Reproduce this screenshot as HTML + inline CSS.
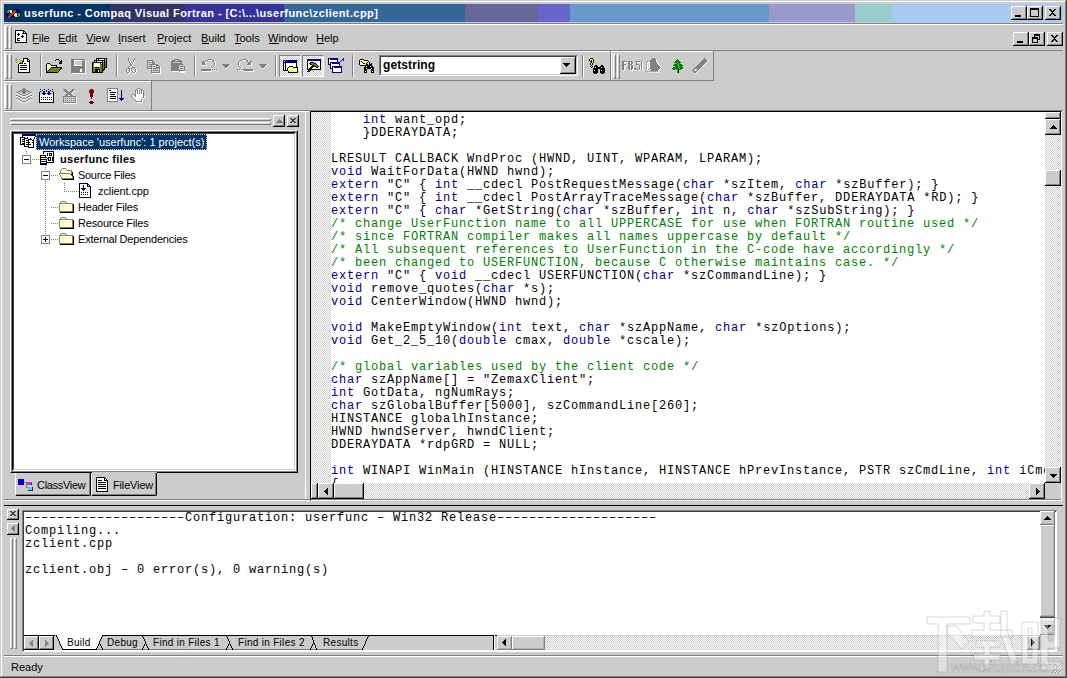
<!DOCTYPE html>
<html><head><meta charset="utf-8">
<style>
*{margin:0;padding:0;box-sizing:border-box}
html,body{width:1067px;height:678px;overflow:hidden;background:#cccccc}
body{position:relative;font-family:"Liberation Sans",sans-serif;font-size:11px;line-height:13px;color:#000}
.a{position:absolute}
svg.a{overflow:visible}
.dither{background-color:#fff;background-image:linear-gradient(45deg,#cccccc 25%,transparent 25%,transparent 75%,#cccccc 75%),linear-gradient(45deg,#cccccc 25%,transparent 25%,transparent 75%,#cccccc 75%);background-size:2px 2px;background-position:0 0,1px 1px}
.mono{font-family:"Liberation Mono",monospace;font-size:12px;letter-spacing:0.8px;line-height:13px;white-space:pre}
.k{color:#000080}.c{color:#008000}
u{text-decoration:none;border-bottom:1px solid #000}
</style></head><body>

<div class="a" style="left:1px;top:1px;width:1px;height:676px;background:#fff"></div>
<div class="a" style="left:1px;top:1px;width:1065px;height:1px;background:#fff"></div>
<div class="a" style="left:1065px;top:1px;width:1px;height:676px;background:#808080"></div>
<div class="a" style="left:1066px;top:0px;width:1px;height:678px;background:#404040"></div>
<div class="a" style="left:1px;top:676px;width:1065px;height:1px;background:#808080"></div>
<div class="a" style="left:0px;top:677px;width:1067px;height:1px;background:#404040"></div>
<div class="a" style="left:4px;top:4px;width:106px;height:18px;background:#003366"></div>
<div class="a" style="left:110px;top:4px;width:74px;height:18px;background:#333366"></div>
<div class="a" style="left:184px;top:4px;width:100px;height:18px;background:#333399"></div>
<div class="a" style="left:284px;top:4px;width:181px;height:18px;background:#336699"></div>
<div class="a" style="left:465px;top:4px;width:73px;height:18px;background:#666699"></div>
<div class="a" style="left:538px;top:4px;width:32px;height:18px;background:#6666cc"></div>
<div class="a" style="left:570px;top:4px;width:199px;height:18px;background:#6699cc"></div>
<div class="a" style="left:769px;top:4px;width:86px;height:18px;background:#9999cc"></div>
<div class="a" style="left:855px;top:4px;width:37px;height:18px;background:#99cccc"></div>
<div class="a" style="left:892px;top:4px;width:171px;height:18px;background:#a6caf0"></div>
<svg class="a" style="left:5px;top:9px;" width="16" height="9" viewBox="0 0 16 9" shape-rendering="crispEdges"><rect x="3" y="0" width="4" height="1" fill="#001030"/><rect x="9" y="0" width="5" height="1" fill="#001030"/><rect x="2" y="1" width="1" height="1" fill="#001030"/><rect x="3" y="1" width="2" height="1" fill="#30b050"/><rect x="5" y="1" width="2" height="1" fill="#f0f070"/><rect x="7" y="1" width="1" height="1" fill="#001030"/><rect x="9" y="1" width="2" height="1" fill="#d02828"/><rect x="11" y="1" width="3" height="1" fill="#0000a0"/><rect x="14" y="1" width="1" height="1" fill="#001030"/><rect x="1" y="2" width="1" height="1" fill="#001030"/><rect x="2" y="2" width="3" height="1" fill="#30b050"/><rect x="5" y="2" width="2" height="1" fill="#f0f070"/><rect x="7" y="2" width="1" height="1" fill="#001030"/><rect x="8" y="2" width="3" height="1" fill="#d02828"/><rect x="11" y="2" width="4" height="1" fill="#0000a0"/><rect x="15" y="2" width="1" height="1" fill="#001030"/><rect x="1" y="3" width="1" height="1" fill="#001030"/><rect x="2" y="3" width="2" height="1" fill="#30b050"/><rect x="4" y="3" width="1" height="1" fill="#001030"/><rect x="5" y="3" width="2" height="1" fill="#f0f070"/><rect x="7" y="3" width="3" height="1" fill="#d02828"/><rect x="10" y="3" width="1" height="1" fill="#001030"/><rect x="11" y="3" width="4" height="1" fill="#0000a0"/><rect x="15" y="3" width="1" height="1" fill="#001030"/><rect x="1" y="4" width="1" height="1" fill="#001030"/><rect x="2" y="4" width="2" height="1" fill="#0000a0"/><rect x="4" y="4" width="2" height="1" fill="#001030"/><rect x="6" y="4" width="3" height="1" fill="#d02828"/><rect x="9" y="4" width="1" height="1" fill="#001030"/><rect x="10" y="4" width="2" height="1" fill="#f0f070"/><rect x="12" y="4" width="1" height="1" fill="#001030"/><rect x="13" y="4" width="2" height="1" fill="#30b050"/><rect x="15" y="4" width="1" height="1" fill="#001030"/><rect x="1" y="5" width="1" height="1" fill="#001030"/><rect x="2" y="5" width="3" height="1" fill="#0000a0"/><rect x="5" y="5" width="3" height="1" fill="#d02828"/><rect x="8" y="5" width="1" height="1" fill="#001030"/><rect x="9" y="5" width="3" height="1" fill="#f0f070"/><rect x="12" y="5" width="1" height="1" fill="#001030"/><rect x="13" y="5" width="2" height="1" fill="#30b050"/><rect x="15" y="5" width="1" height="1" fill="#001030"/><rect x="1" y="6" width="1" height="1" fill="#001030"/><rect x="2" y="6" width="2" height="1" fill="#0000a0"/><rect x="4" y="6" width="3" height="1" fill="#d02828"/><rect x="7" y="6" width="1" height="1" fill="#0000a0"/><rect x="8" y="6" width="1" height="1" fill="#001030"/><rect x="9" y="6" width="3" height="1" fill="#f0f070"/><rect x="12" y="6" width="1" height="1" fill="#001030"/><rect x="13" y="6" width="2" height="1" fill="#30b050"/><rect x="15" y="6" width="1" height="1" fill="#001030"/><rect x="2" y="7" width="1" height="1" fill="#001030"/><rect x="3" y="7" width="3" height="1" fill="#d02828"/><rect x="6" y="7" width="2" height="1" fill="#0000a0"/><rect x="8" y="7" width="2" height="1" fill="#001030"/><rect x="10" y="7" width="2" height="1" fill="#f0f070"/><rect x="12" y="7" width="2" height="1" fill="#30b050"/><rect x="14" y="7" width="1" height="1" fill="#001030"/><rect x="3" y="8" width="2" height="1" fill="#d02828"/><rect x="5" y="8" width="3" height="1" fill="#001030"/><rect x="10" y="8" width="4" height="1" fill="#001030"/></svg>
<div class="a " style="left:24px;top:5px;white-space:pre;color:#fff;font-weight:bold;font-size:11px;line-height:17px;letter-spacing:0.42px">userfunc - Compaq Visual Fortran - [C:\...\userfunc\zclient.cpp]</div>
<div class="a" style="left:1011px;top:6px;width:16px;height:14px;background:#cccccc;box-shadow:inset -1px -1px 0 #000,inset 1px 1px 0 #fff,inset -2px -2px 0 #808080"></div>
<div class="a" style="left:1027px;top:6px;width:16px;height:14px;background:#cccccc;box-shadow:inset -1px -1px 0 #000,inset 1px 1px 0 #fff,inset -2px -2px 0 #808080"></div>
<div class="a" style="left:1045px;top:6px;width:16px;height:14px;background:#cccccc;box-shadow:inset -1px -1px 0 #000,inset 1px 1px 0 #fff,inset -2px -2px 0 #808080"></div>
<svg class="a" style="left:1011px;top:6px;" width="16" height="14" viewBox="0 0 16 14" shape-rendering="crispEdges"><rect x="4" y="9" width="6" height="2" fill="#000"/></svg>
<svg class="a" style="left:1027px;top:6px;" width="16" height="14" viewBox="0 0 16 14" shape-rendering="crispEdges"><rect x="3" y="2" width="9" height="9" fill="#000"/><rect x="4" y="4" width="7" height="6" fill="#cccccc"/></svg>
<svg class="a" style="left:1045px;top:6px;" width="16" height="14" viewBox="0 0 16 14" shape-rendering="crispEdges"><path d="M4 3h2v1h1v1h1v-1h1v-1h2v1h-1v1h-1v1h-1v1h1v1h1v1h1v1h-2v-1h-1v-1h-1v1h-1v1h-2v-1h1v-1h1v-1h1v-1h-1v-1h-1v-1h-1z" fill="#000"/></svg>
<div class="a" style="left:4px;top:23px;width:1059px;height:1px;background:#808080"></div>
<div class="a" style="left:4px;top:24px;width:1059px;height:1px;background:#fff"></div>
<div class="a" style="left:5px;top:26px;width:3px;height:23px;border:1px solid;border-color:#fff #808080 #808080 #fff"></div>
<div class="a" style="left:9px;top:26px;width:3px;height:23px;border:1px solid;border-color:#fff #808080 #808080 #fff"></div>
<svg class="a" style="left:15px;top:30px;" width="12" height="13" viewBox="0 0 12 13" shape-rendering="crispEdges"><rect x="0" y="0" width="9" height="1" fill="#000"/><rect x="0" y="1" width="1" height="1" fill="#000"/><rect x="1" y="1" width="7" height="1" fill="#fff"/><rect x="8" y="1" width="2" height="1" fill="#000"/><rect x="0" y="2" width="1" height="1" fill="#000"/><rect x="1" y="2" width="7" height="1" fill="#fff"/><rect x="8" y="2" width="1" height="1" fill="#000"/><rect x="9" y="2" width="1" height="1" fill="#fff"/><rect x="10" y="2" width="1" height="1" fill="#000"/><rect x="0" y="3" width="1" height="1" fill="#000"/><rect x="1" y="3" width="2" height="1" fill="#fff"/><rect x="3" y="3" width="1" height="1" fill="#000"/><rect x="4" y="3" width="3" height="1" fill="#fff"/><rect x="7" y="3" width="5" height="1" fill="#000"/><rect x="0" y="4" width="1" height="1" fill="#000"/><rect x="1" y="4" width="1" height="1" fill="#fff"/><rect x="2" y="4" width="3" height="1" fill="#000"/><rect x="5" y="4" width="6" height="1" fill="#fff"/><rect x="11" y="4" width="1" height="1" fill="#000"/><rect x="0" y="5" width="1" height="1" fill="#000"/><rect x="1" y="5" width="2" height="1" fill="#fff"/><rect x="3" y="5" width="1" height="1" fill="#000"/><rect x="4" y="5" width="3" height="1" fill="#fff"/><rect x="7" y="5" width="1" height="1" fill="#000"/><rect x="8" y="5" width="3" height="1" fill="#fff"/><rect x="11" y="5" width="1" height="1" fill="#000"/><rect x="0" y="6" width="1" height="1" fill="#000"/><rect x="1" y="6" width="5" height="1" fill="#fff"/><rect x="6" y="6" width="3" height="1" fill="#000"/><rect x="9" y="6" width="2" height="1" fill="#fff"/><rect x="11" y="6" width="1" height="1" fill="#000"/><rect x="0" y="7" width="1" height="1" fill="#000"/><rect x="1" y="7" width="6" height="1" fill="#fff"/><rect x="7" y="7" width="1" height="1" fill="#000"/><rect x="8" y="7" width="3" height="1" fill="#fff"/><rect x="11" y="7" width="1" height="1" fill="#000"/><rect x="0" y="8" width="1" height="1" fill="#000"/><rect x="1" y="8" width="1" height="1" fill="#fff"/><rect x="2" y="8" width="3" height="1" fill="#000"/><rect x="5" y="8" width="6" height="1" fill="#fff"/><rect x="11" y="8" width="1" height="1" fill="#000"/><rect x="0" y="9" width="1" height="1" fill="#000"/><rect x="1" y="9" width="1" height="1" fill="#fff"/><rect x="2" y="9" width="1" height="1" fill="#000"/><rect x="3" y="9" width="8" height="1" fill="#fff"/><rect x="11" y="9" width="1" height="1" fill="#000"/><rect x="0" y="10" width="1" height="1" fill="#000"/><rect x="1" y="10" width="1" height="1" fill="#fff"/><rect x="2" y="10" width="3" height="1" fill="#000"/><rect x="5" y="10" width="6" height="1" fill="#fff"/><rect x="11" y="10" width="1" height="1" fill="#000"/><rect x="0" y="11" width="1" height="1" fill="#000"/><rect x="1" y="11" width="10" height="1" fill="#fff"/><rect x="11" y="11" width="1" height="1" fill="#000"/><rect x="0" y="12" width="12" height="1" fill="#000"/></svg>
<div class="a " style="left:32px;top:32px;white-space:pre;line-height:13px">File</div>
<div class="a" style="left:33px;top:43px;width:6px;height:1px;background:#000"></div>
<div class="a " style="left:58px;top:32px;white-space:pre;line-height:13px">Edit</div>
<div class="a" style="left:59px;top:43px;width:7px;height:1px;background:#000"></div>
<div class="a " style="left:86px;top:32px;white-space:pre;line-height:13px">View</div>
<div class="a" style="left:87px;top:43px;width:7px;height:1px;background:#000"></div>
<div class="a " style="left:118px;top:32px;white-space:pre;line-height:13px">Insert</div>
<div class="a" style="left:119px;top:43px;width:2px;height:1px;background:#000"></div>
<div class="a " style="left:157px;top:32px;white-space:pre;line-height:13px">Project</div>
<div class="a" style="left:158px;top:43px;width:7px;height:1px;background:#000"></div>
<div class="a " style="left:201px;top:32px;white-space:pre;line-height:13px">Build</div>
<div class="a" style="left:202px;top:43px;width:7px;height:1px;background:#000"></div>
<div class="a " style="left:234px;top:32px;white-space:pre;line-height:13px">Tools</div>
<div class="a" style="left:235px;top:43px;width:6px;height:1px;background:#000"></div>
<div class="a " style="left:268px;top:32px;white-space:pre;line-height:13px">Window</div>
<div class="a" style="left:269px;top:43px;width:10px;height:1px;background:#000"></div>
<div class="a " style="left:316px;top:32px;white-space:pre;line-height:13px">Help</div>
<div class="a" style="left:317px;top:43px;width:7px;height:1px;background:#000"></div>
<div class="a" style="left:1013px;top:32px;width:16px;height:14px;background:#cccccc;box-shadow:inset -1px -1px 0 #000,inset 1px 1px 0 #fff,inset -2px -2px 0 #808080"></div>
<div class="a" style="left:1029px;top:32px;width:16px;height:14px;background:#cccccc;box-shadow:inset -1px -1px 0 #000,inset 1px 1px 0 #fff,inset -2px -2px 0 #808080"></div>
<div class="a" style="left:1047px;top:32px;width:16px;height:14px;background:#cccccc;box-shadow:inset -1px -1px 0 #000,inset 1px 1px 0 #fff,inset -2px -2px 0 #808080"></div>
<svg class="a" style="left:1013px;top:32px;" width="16" height="14" viewBox="0 0 16 14" shape-rendering="crispEdges"><rect x="4" y="9" width="6" height="2" fill="#000"/></svg>
<svg class="a" style="left:1029px;top:32px;" width="16" height="14" viewBox="0 0 16 14" shape-rendering="crispEdges"><rect x="5" y="2" width="6" height="1" fill="#000"/><rect x="5" y="3" width="6" height="1" fill="#000"/><rect x="5" y="2" width="1" height="3" fill="#000"/><rect x="10" y="2" width="1" height="6" fill="#000"/><rect x="9" y="7" width="2" height="1" fill="#000"/><rect x="3" y="5" width="6" height="2" fill="#000"/><rect x="3" y="5" width="1" height="6" fill="#000"/><rect x="8" y="5" width="1" height="6" fill="#000"/><rect x="3" y="10" width="6" height="1" fill="#000"/></svg>
<svg class="a" style="left:1047px;top:32px;" width="16" height="14" viewBox="0 0 16 14" shape-rendering="crispEdges"><path d="M4 3h2v1h1v1h1v-1h1v-1h2v1h-1v1h-1v1h-1v1h1v1h1v1h1v1h-2v-1h-1v-1h-1v1h-1v1h-2v-1h1v-1h1v-1h1v-1h-1v-1h-1v-1h-1z" fill="#000"/></svg>
<div class="a" style="left:4px;top:25px;width:1px;height:25px;background:#fff"></div>
<div class="a" style="left:4px;top:52px;width:1px;height:28px;background:#fff"></div>
<div class="a" style="left:4px;top:82px;width:1px;height:28px;background:#fff"></div>
<div class="a" style="left:4px;top:50px;width:1059px;height:1px;background:#808080"></div>
<div class="a" style="left:4px;top:51px;width:606px;height:1px;background:#fff"></div>
<div class="a" style="left:611px;top:51px;width:102px;height:1px;background:#fff"></div>
<div class="a" style="left:4px;top:80px;width:710px;height:1px;background:#808080"></div>
<div class="a" style="left:4px;top:81px;width:147px;height:1px;background:#fff"></div>
<div class="a" style="left:4px;top:110px;width:1059px;height:1px;background:#808080"></div>
<div class="a" style="left:4px;top:111px;width:1059px;height:1px;background:#fff"></div>
<div class="a" style="left:610px;top:51px;width:1px;height:30px;background:#808080"></div>
<div class="a" style="left:611px;top:51px;width:1px;height:29px;background:#fff"></div>
<div class="a" style="left:713px;top:51px;width:1px;height:30px;background:#808080"></div>
<div class="a" style="left:151px;top:81px;width:1px;height:30px;background:#808080"></div>
<div class="a" style="left:5px;top:54px;width:3px;height:25px;border:1px solid;border-color:#fff #808080 #808080 #fff"></div>
<div class="a" style="left:9px;top:54px;width:3px;height:25px;border:1px solid;border-color:#fff #808080 #808080 #fff"></div>
<svg class="a" style="left:14px;top:57px;" width="16" height="16" viewBox="0 0 16 16" shape-rendering="crispEdges"><rect x="2" y="1" width="1" height="1" fill="#808080"/><rect x="4" y="1" width="1" height="1" fill="#ffff00"/><rect x="9" y="1" width="5" height="1" fill="#000"/><rect x="3" y="2" width="1" height="1" fill="#808080"/><rect x="4" y="2" width="1" height="1" fill="#ffff00"/><rect x="5" y="2" width="1" height="1" fill="#808080"/><rect x="9" y="2" width="1" height="1" fill="#000"/><rect x="10" y="2" width="3" height="1" fill="#fff"/><rect x="13" y="2" width="2" height="1" fill="#000"/><rect x="1" y="3" width="2" height="1" fill="#808080"/><rect x="3" y="3" width="3" height="1" fill="#ffff00"/><rect x="6" y="3" width="2" height="1" fill="#808080"/><rect x="9" y="3" width="1" height="1" fill="#000"/><rect x="10" y="3" width="3" height="1" fill="#fff"/><rect x="13" y="3" width="1" height="1" fill="#000"/><rect x="14" y="3" width="1" height="1" fill="#fff"/><rect x="15" y="3" width="1" height="1" fill="#000"/><rect x="3" y="4" width="1" height="1" fill="#808080"/><rect x="4" y="4" width="1" height="1" fill="#ffff00"/><rect x="5" y="4" width="1" height="1" fill="#808080"/><rect x="8" y="4" width="2" height="1" fill="#000"/><rect x="10" y="4" width="3" height="1" fill="#fff"/><rect x="13" y="4" width="3" height="1" fill="#000"/><rect x="2" y="5" width="1" height="1" fill="#808080"/><rect x="4" y="5" width="1" height="1" fill="#ffff00"/><rect x="6" y="5" width="1" height="1" fill="#808080"/><rect x="8" y="5" width="1" height="1" fill="#000"/><rect x="9" y="5" width="6" height="1" fill="#fff"/><rect x="15" y="5" width="1" height="1" fill="#000"/><rect x="5" y="6" width="4" height="1" fill="#000"/><rect x="9" y="6" width="1" height="1" fill="#fff"/><rect x="10" y="6" width="2" height="1" fill="#000"/><rect x="12" y="6" width="3" height="1" fill="#fff"/><rect x="15" y="6" width="1" height="1" fill="#000"/><rect x="4" y="7" width="1" height="1" fill="#000"/><rect x="5" y="7" width="10" height="1" fill="#fff"/><rect x="15" y="7" width="1" height="1" fill="#000"/><rect x="4" y="8" width="1" height="1" fill="#000"/><rect x="5" y="8" width="1" height="1" fill="#fff"/><rect x="6" y="8" width="7" height="1" fill="#000"/><rect x="13" y="8" width="2" height="1" fill="#fff"/><rect x="15" y="8" width="1" height="1" fill="#000"/><rect x="4" y="9" width="1" height="1" fill="#000"/><rect x="5" y="9" width="10" height="1" fill="#fff"/><rect x="15" y="9" width="1" height="1" fill="#000"/><rect x="4" y="10" width="1" height="1" fill="#000"/><rect x="5" y="10" width="1" height="1" fill="#fff"/><rect x="6" y="10" width="7" height="1" fill="#000"/><rect x="13" y="10" width="2" height="1" fill="#fff"/><rect x="15" y="10" width="1" height="1" fill="#000"/><rect x="4" y="11" width="1" height="1" fill="#000"/><rect x="5" y="11" width="10" height="1" fill="#fff"/><rect x="15" y="11" width="1" height="1" fill="#000"/><rect x="4" y="12" width="1" height="1" fill="#000"/><rect x="5" y="12" width="1" height="1" fill="#fff"/><rect x="6" y="12" width="7" height="1" fill="#000"/><rect x="13" y="12" width="2" height="1" fill="#fff"/><rect x="15" y="12" width="1" height="1" fill="#000"/><rect x="4" y="13" width="1" height="1" fill="#000"/><rect x="5" y="13" width="10" height="1" fill="#fff"/><rect x="15" y="13" width="1" height="1" fill="#000"/><rect x="4" y="14" width="1" height="1" fill="#000"/><rect x="5" y="14" width="10" height="1" fill="#fff"/><rect x="15" y="14" width="1" height="1" fill="#000"/><rect x="4" y="15" width="12" height="1" fill="#000"/></svg>
<div class="a" style="left:40px;top:55px;width:1px;height:22px;background:#808080"></div>
<div class="a" style="left:41px;top:55px;width:1px;height:22px;background:#fff"></div>
<svg class="a" style="left:46px;top:58px;" width="16" height="15" viewBox="0 0 16 15" shape-rendering="crispEdges"><rect x="10" y="1" width="3" height="1" fill="#000"/><rect x="9" y="2" width="1" height="1" fill="#000"/><rect x="13" y="2" width="1" height="1" fill="#000"/><rect x="15" y="2" width="1" height="1" fill="#000"/><rect x="14" y="3" width="2" height="1" fill="#000"/><rect x="13" y="4" width="3" height="1" fill="#000"/><rect x="1" y="5" width="3" height="1" fill="#000"/><rect x="13" y="5" width="3" height="1" fill="#000"/><rect x="0" y="6" width="1" height="1" fill="#000"/><rect x="1" y="6" width="1" height="1" fill="#ffff99"/><rect x="2" y="6" width="1" height="1" fill="#fff"/><rect x="3" y="6" width="1" height="1" fill="#ffff99"/><rect x="4" y="6" width="1" height="1" fill="#000"/><rect x="0" y="7" width="1" height="1" fill="#000"/><rect x="1" y="7" width="1" height="1" fill="#fff"/><rect x="2" y="7" width="1" height="1" fill="#ffff99"/><rect x="3" y="7" width="1" height="1" fill="#fff"/><rect x="4" y="7" width="1" height="1" fill="#ffff99"/><rect x="5" y="7" width="6" height="1" fill="#000"/><rect x="0" y="8" width="1" height="1" fill="#000"/><rect x="1" y="8" width="1" height="1" fill="#ffff99"/><rect x="2" y="8" width="1" height="1" fill="#fff"/><rect x="3" y="8" width="1" height="1" fill="#ffff99"/><rect x="4" y="8" width="1" height="1" fill="#fff"/><rect x="5" y="8" width="1" height="1" fill="#ffff99"/><rect x="6" y="8" width="1" height="1" fill="#fff"/><rect x="7" y="8" width="1" height="1" fill="#ffff99"/><rect x="8" y="8" width="1" height="1" fill="#fff"/><rect x="9" y="8" width="1" height="1" fill="#ffff99"/><rect x="10" y="8" width="1" height="1" fill="#000"/><rect x="0" y="9" width="1" height="1" fill="#000"/><rect x="1" y="9" width="1" height="1" fill="#fff"/><rect x="2" y="9" width="1" height="1" fill="#ffff99"/><rect x="3" y="9" width="1" height="1" fill="#fff"/><rect x="4" y="9" width="1" height="1" fill="#ffff99"/><rect x="5" y="9" width="11" height="1" fill="#000"/><rect x="0" y="10" width="1" height="1" fill="#000"/><rect x="1" y="10" width="1" height="1" fill="#ffff99"/><rect x="2" y="10" width="1" height="1" fill="#fff"/><rect x="3" y="10" width="1" height="1" fill="#ffff99"/><rect x="4" y="10" width="1" height="1" fill="#000"/><rect x="5" y="10" width="10" height="1" fill="#808000"/><rect x="15" y="10" width="1" height="1" fill="#000"/><rect x="0" y="11" width="1" height="1" fill="#000"/><rect x="1" y="11" width="1" height="1" fill="#fff"/><rect x="2" y="11" width="1" height="1" fill="#ffff99"/><rect x="3" y="11" width="1" height="1" fill="#000"/><rect x="4" y="11" width="10" height="1" fill="#808000"/><rect x="14" y="11" width="1" height="1" fill="#000"/><rect x="0" y="12" width="1" height="1" fill="#000"/><rect x="1" y="12" width="1" height="1" fill="#ffff99"/><rect x="2" y="12" width="1" height="1" fill="#000"/><rect x="3" y="12" width="10" height="1" fill="#808000"/><rect x="13" y="12" width="1" height="1" fill="#000"/><rect x="0" y="13" width="2" height="1" fill="#000"/><rect x="2" y="13" width="10" height="1" fill="#808000"/><rect x="12" y="13" width="1" height="1" fill="#000"/><rect x="0" y="14" width="12" height="1" fill="#000"/></svg>
<svg class="a" style="left:71px;top:59px;" width="15" height="15" viewBox="0 0 15 15" shape-rendering="crispEdges"><rect x="0" y="0" width="14" height="1" fill="#808080"/><rect x="0" y="1" width="3" height="1" fill="#808080"/><rect x="3" y="1" width="8" height="1" fill="#fff"/><rect x="11" y="1" width="1" height="1" fill="#808080"/><rect x="12" y="1" width="1" height="1" fill="#fff"/><rect x="13" y="1" width="1" height="1" fill="#808080"/><rect x="0" y="2" width="3" height="1" fill="#808080"/><rect x="3" y="2" width="1" height="1" fill="#fff"/><rect x="4" y="2" width="7" height="1" fill="#cccccc"/><rect x="11" y="2" width="3" height="1" fill="#808080"/><rect x="14" y="2" width="1" height="1" fill="#fff"/><rect x="0" y="3" width="3" height="1" fill="#808080"/><rect x="3" y="3" width="1" height="1" fill="#fff"/><rect x="4" y="3" width="7" height="1" fill="#cccccc"/><rect x="11" y="3" width="3" height="1" fill="#808080"/><rect x="14" y="3" width="1" height="1" fill="#fff"/><rect x="0" y="4" width="3" height="1" fill="#808080"/><rect x="3" y="4" width="1" height="1" fill="#fff"/><rect x="4" y="4" width="7" height="1" fill="#cccccc"/><rect x="11" y="4" width="3" height="1" fill="#808080"/><rect x="14" y="4" width="1" height="1" fill="#fff"/><rect x="0" y="5" width="3" height="1" fill="#808080"/><rect x="3" y="5" width="1" height="1" fill="#fff"/><rect x="4" y="5" width="7" height="1" fill="#cccccc"/><rect x="11" y="5" width="3" height="1" fill="#808080"/><rect x="14" y="5" width="1" height="1" fill="#fff"/><rect x="0" y="6" width="3" height="1" fill="#808080"/><rect x="3" y="6" width="8" height="1" fill="#fff"/><rect x="11" y="6" width="3" height="1" fill="#808080"/><rect x="14" y="6" width="1" height="1" fill="#fff"/><rect x="0" y="7" width="14" height="1" fill="#808080"/><rect x="14" y="7" width="1" height="1" fill="#fff"/><rect x="0" y="8" width="14" height="1" fill="#808080"/><rect x="14" y="8" width="1" height="1" fill="#fff"/><rect x="0" y="9" width="14" height="1" fill="#808080"/><rect x="14" y="9" width="1" height="1" fill="#fff"/><rect x="0" y="10" width="9" height="1" fill="#808080"/><rect x="9" y="10" width="2" height="1" fill="#fff"/><rect x="11" y="10" width="3" height="1" fill="#808080"/><rect x="14" y="10" width="1" height="1" fill="#fff"/><rect x="0" y="11" width="9" height="1" fill="#808080"/><rect x="9" y="11" width="2" height="1" fill="#fff"/><rect x="11" y="11" width="3" height="1" fill="#808080"/><rect x="14" y="11" width="1" height="1" fill="#fff"/><rect x="0" y="12" width="9" height="1" fill="#808080"/><rect x="9" y="12" width="2" height="1" fill="#fff"/><rect x="11" y="12" width="3" height="1" fill="#808080"/><rect x="14" y="12" width="1" height="1" fill="#fff"/><rect x="0" y="13" width="14" height="1" fill="#808080"/><rect x="14" y="13" width="1" height="1" fill="#fff"/><rect x="1" y="14" width="14" height="1" fill="#fff"/></svg>
<svg class="a" style="left:92px;top:58px;" width="16" height="15" viewBox="0 0 16 15" shape-rendering="crispEdges"><rect x="4" y="0" width="11" height="1" fill="#000"/><rect x="4" y="1" width="1" height="1" fill="#000"/><rect x="5" y="1" width="1" height="1" fill="#fff"/><rect x="6" y="1" width="1" height="1" fill="#000"/><rect x="7" y="1" width="5" height="1" fill="#fff"/><rect x="12" y="1" width="1" height="1" fill="#000"/><rect x="13" y="1" width="1" height="1" fill="#fff"/><rect x="14" y="1" width="1" height="1" fill="#000"/><rect x="2" y="2" width="11" height="1" fill="#000"/><rect x="13" y="2" width="1" height="1" fill="#808000"/><rect x="14" y="2" width="1" height="1" fill="#000"/><rect x="2" y="3" width="1" height="1" fill="#000"/><rect x="3" y="3" width="1" height="1" fill="#fff"/><rect x="4" y="3" width="1" height="1" fill="#000"/><rect x="5" y="3" width="5" height="1" fill="#fff"/><rect x="10" y="3" width="1" height="1" fill="#000"/><rect x="11" y="3" width="1" height="1" fill="#fff"/><rect x="12" y="3" width="1" height="1" fill="#000"/><rect x="13" y="3" width="1" height="1" fill="#808000"/><rect x="14" y="3" width="1" height="1" fill="#000"/><rect x="0" y="4" width="11" height="1" fill="#000"/><rect x="11" y="4" width="1" height="1" fill="#808000"/><rect x="12" y="4" width="1" height="1" fill="#000"/><rect x="13" y="4" width="1" height="1" fill="#808000"/><rect x="14" y="4" width="1" height="1" fill="#000"/><rect x="0" y="5" width="1" height="1" fill="#000"/><rect x="1" y="5" width="1" height="1" fill="#808000"/><rect x="2" y="5" width="6" height="1" fill="#fff"/><rect x="8" y="5" width="1" height="1" fill="#000"/><rect x="9" y="5" width="1" height="1" fill="#fff"/><rect x="10" y="5" width="1" height="1" fill="#000"/><rect x="11" y="5" width="1" height="1" fill="#808000"/><rect x="12" y="5" width="1" height="1" fill="#000"/><rect x="13" y="5" width="1" height="1" fill="#808000"/><rect x="14" y="5" width="1" height="1" fill="#000"/><rect x="0" y="6" width="1" height="1" fill="#000"/><rect x="1" y="6" width="1" height="1" fill="#808000"/><rect x="2" y="6" width="6" height="1" fill="#fff"/><rect x="8" y="6" width="2" height="1" fill="#808000"/><rect x="10" y="6" width="1" height="1" fill="#000"/><rect x="11" y="6" width="1" height="1" fill="#808000"/><rect x="12" y="6" width="1" height="1" fill="#000"/><rect x="13" y="6" width="1" height="1" fill="#808000"/><rect x="14" y="6" width="1" height="1" fill="#000"/><rect x="0" y="7" width="1" height="1" fill="#000"/><rect x="1" y="7" width="1" height="1" fill="#808000"/><rect x="2" y="7" width="6" height="1" fill="#fff"/><rect x="8" y="7" width="2" height="1" fill="#808000"/><rect x="10" y="7" width="1" height="1" fill="#000"/><rect x="11" y="7" width="1" height="1" fill="#808000"/><rect x="12" y="7" width="1" height="1" fill="#000"/><rect x="13" y="7" width="1" height="1" fill="#808000"/><rect x="14" y="7" width="1" height="1" fill="#000"/><rect x="0" y="8" width="1" height="1" fill="#000"/><rect x="1" y="8" width="1" height="1" fill="#808000"/><rect x="2" y="8" width="6" height="1" fill="#fff"/><rect x="8" y="8" width="2" height="1" fill="#808000"/><rect x="10" y="8" width="1" height="1" fill="#000"/><rect x="11" y="8" width="1" height="1" fill="#808000"/><rect x="12" y="8" width="1" height="1" fill="#000"/><rect x="13" y="8" width="1" height="1" fill="#808000"/><rect x="14" y="8" width="1" height="1" fill="#000"/><rect x="0" y="9" width="1" height="1" fill="#000"/><rect x="1" y="9" width="2" height="1" fill="#808000"/><rect x="3" y="9" width="4" height="1" fill="#000"/><rect x="7" y="9" width="3" height="1" fill="#808000"/><rect x="10" y="9" width="1" height="1" fill="#000"/><rect x="11" y="9" width="1" height="1" fill="#808000"/><rect x="12" y="9" width="3" height="1" fill="#000"/><rect x="0" y="10" width="1" height="1" fill="#000"/><rect x="1" y="10" width="9" height="1" fill="#808000"/><rect x="10" y="10" width="1" height="1" fill="#000"/><rect x="11" y="10" width="1" height="1" fill="#808000"/><rect x="12" y="10" width="1" height="1" fill="#000"/><rect x="0" y="11" width="1" height="1" fill="#000"/><rect x="1" y="11" width="2" height="1" fill="#808000"/><rect x="3" y="11" width="5" height="1" fill="#000"/><rect x="8" y="11" width="2" height="1" fill="#808000"/><rect x="10" y="11" width="3" height="1" fill="#000"/><rect x="0" y="12" width="1" height="1" fill="#000"/><rect x="1" y="12" width="2" height="1" fill="#808000"/><rect x="3" y="12" width="3" height="1" fill="#000"/><rect x="6" y="12" width="1" height="1" fill="#fff"/><rect x="7" y="12" width="1" height="1" fill="#000"/><rect x="8" y="12" width="2" height="1" fill="#808000"/><rect x="10" y="12" width="2" height="1" fill="#000"/><rect x="0" y="13" width="1" height="1" fill="#000"/><rect x="1" y="13" width="2" height="1" fill="#808000"/><rect x="3" y="13" width="3" height="1" fill="#000"/><rect x="6" y="13" width="1" height="1" fill="#fff"/><rect x="7" y="13" width="1" height="1" fill="#000"/><rect x="8" y="13" width="2" height="1" fill="#808000"/><rect x="10" y="13" width="1" height="1" fill="#000"/><rect x="0" y="14" width="11" height="1" fill="#000"/></svg>
<div class="a" style="left:116px;top:55px;width:1px;height:22px;background:#808080"></div>
<div class="a" style="left:117px;top:55px;width:1px;height:22px;background:#fff"></div>
<svg class="a" style="left:125px;top:58px;" width="15" height="16" viewBox="0 0 15 16" shape-rendering="crispEdges"><rect x="3" y="0" width="1" height="1" fill="#808080"/><rect x="9" y="0" width="1" height="1" fill="#808080"/><rect x="3" y="1" width="1" height="1" fill="#808080"/><rect x="9" y="1" width="1" height="1" fill="#808080"/><rect x="3" y="2" width="1" height="1" fill="#808080"/><rect x="4" y="2" width="1" height="1" fill="#fff"/><rect x="8" y="2" width="1" height="1" fill="#808080"/><rect x="9" y="2" width="1" height="1" fill="#fff"/><rect x="4" y="3" width="1" height="1" fill="#808080"/><rect x="5" y="3" width="1" height="1" fill="#fff"/><rect x="8" y="3" width="1" height="1" fill="#808080"/><rect x="9" y="3" width="1" height="1" fill="#fff"/><rect x="4" y="4" width="1" height="1" fill="#808080"/><rect x="5" y="4" width="1" height="1" fill="#fff"/><rect x="7" y="4" width="1" height="1" fill="#808080"/><rect x="8" y="4" width="1" height="1" fill="#fff"/><rect x="5" y="5" width="1" height="1" fill="#808080"/><rect x="6" y="5" width="1" height="1" fill="#fff"/><rect x="7" y="5" width="1" height="1" fill="#808080"/><rect x="8" y="5" width="1" height="1" fill="#fff"/><rect x="5" y="6" width="2" height="1" fill="#808080"/><rect x="7" y="6" width="1" height="1" fill="#fff"/><rect x="5" y="7" width="2" height="1" fill="#808080"/><rect x="7" y="7" width="1" height="1" fill="#fff"/><rect x="4" y="8" width="1" height="1" fill="#808080"/><rect x="5" y="8" width="2" height="1" fill="#fff"/><rect x="7" y="8" width="1" height="1" fill="#808080"/><rect x="8" y="8" width="1" height="1" fill="#fff"/><rect x="3" y="9" width="1" height="1" fill="#808080"/><rect x="4" y="9" width="1" height="1" fill="#fff"/><rect x="7" y="9" width="3" height="1" fill="#808080"/><rect x="2" y="10" width="3" height="1" fill="#808080"/><rect x="6" y="10" width="1" height="1" fill="#808080"/><rect x="7" y="10" width="1" height="1" fill="#fff"/><rect x="9" y="10" width="1" height="1" fill="#808080"/><rect x="10" y="10" width="1" height="1" fill="#fff"/><rect x="1" y="11" width="1" height="1" fill="#808080"/><rect x="2" y="11" width="1" height="1" fill="#fff"/><rect x="4" y="11" width="1" height="1" fill="#808080"/><rect x="5" y="11" width="1" height="1" fill="#fff"/><rect x="6" y="11" width="1" height="1" fill="#808080"/><rect x="7" y="11" width="1" height="1" fill="#fff"/><rect x="10" y="11" width="1" height="1" fill="#808080"/><rect x="11" y="11" width="1" height="1" fill="#fff"/><rect x="1" y="12" width="1" height="1" fill="#808080"/><rect x="2" y="12" width="1" height="1" fill="#fff"/><rect x="4" y="12" width="1" height="1" fill="#808080"/><rect x="5" y="12" width="1" height="1" fill="#fff"/><rect x="6" y="12" width="1" height="1" fill="#808080"/><rect x="7" y="12" width="1" height="1" fill="#fff"/><rect x="10" y="12" width="1" height="1" fill="#808080"/><rect x="11" y="12" width="1" height="1" fill="#fff"/><rect x="1" y="13" width="1" height="1" fill="#808080"/><rect x="2" y="13" width="1" height="1" fill="#fff"/><rect x="4" y="13" width="1" height="1" fill="#808080"/><rect x="5" y="13" width="1" height="1" fill="#fff"/><rect x="7" y="13" width="1" height="1" fill="#808080"/><rect x="8" y="13" width="1" height="1" fill="#fff"/><rect x="10" y="13" width="1" height="1" fill="#808080"/><rect x="11" y="13" width="1" height="1" fill="#fff"/><rect x="2" y="14" width="2" height="1" fill="#808080"/><rect x="4" y="14" width="1" height="1" fill="#fff"/><rect x="8" y="14" width="2" height="1" fill="#808080"/><rect x="10" y="14" width="1" height="1" fill="#fff"/><rect x="3" y="15" width="2" height="1" fill="#fff"/><rect x="9" y="15" width="2" height="1" fill="#fff"/></svg>
<svg class="a" style="left:147px;top:60px;" width="15" height="14" viewBox="0 0 15 14" shape-rendering="crispEdges"><rect x="0" y="0" width="6" height="1" fill="#808080"/><rect x="0" y="1" width="1" height="1" fill="#808080"/><rect x="1" y="1" width="4" height="1" fill="#cccccc"/><rect x="5" y="1" width="2" height="1" fill="#808080"/><rect x="0" y="2" width="1" height="1" fill="#808080"/><rect x="1" y="2" width="1" height="1" fill="#cccccc"/><rect x="2" y="2" width="2" height="1" fill="#808080"/><rect x="4" y="2" width="1" height="1" fill="#cccccc"/><rect x="5" y="2" width="1" height="1" fill="#808080"/><rect x="6" y="2" width="1" height="1" fill="#cccccc"/><rect x="7" y="2" width="1" height="1" fill="#808080"/><rect x="0" y="3" width="1" height="1" fill="#808080"/><rect x="1" y="3" width="4" height="1" fill="#cccccc"/><rect x="5" y="3" width="3" height="1" fill="#808080"/><rect x="8" y="3" width="1" height="1" fill="#fff"/><rect x="0" y="4" width="1" height="1" fill="#808080"/><rect x="1" y="4" width="1" height="1" fill="#cccccc"/><rect x="2" y="4" width="9" height="1" fill="#808080"/><rect x="0" y="5" width="1" height="1" fill="#808080"/><rect x="1" y="5" width="3" height="1" fill="#cccccc"/><rect x="4" y="5" width="1" height="1" fill="#808080"/><rect x="5" y="5" width="4" height="1" fill="#cccccc"/><rect x="9" y="5" width="3" height="1" fill="#808080"/><rect x="0" y="6" width="1" height="1" fill="#808080"/><rect x="1" y="6" width="1" height="1" fill="#cccccc"/><rect x="2" y="6" width="3" height="1" fill="#808080"/><rect x="5" y="6" width="1" height="1" fill="#cccccc"/><rect x="6" y="6" width="2" height="1" fill="#808080"/><rect x="8" y="6" width="1" height="1" fill="#cccccc"/><rect x="9" y="6" width="1" height="1" fill="#808080"/><rect x="10" y="6" width="2" height="1" fill="#cccccc"/><rect x="12" y="6" width="1" height="1" fill="#808080"/><rect x="0" y="7" width="1" height="1" fill="#808080"/><rect x="1" y="7" width="3" height="1" fill="#cccccc"/><rect x="4" y="7" width="1" height="1" fill="#808080"/><rect x="5" y="7" width="4" height="1" fill="#cccccc"/><rect x="9" y="7" width="4" height="1" fill="#808080"/><rect x="13" y="7" width="1" height="1" fill="#fff"/><rect x="0" y="8" width="5" height="1" fill="#808080"/><rect x="5" y="8" width="1" height="1" fill="#cccccc"/><rect x="6" y="8" width="5" height="1" fill="#808080"/><rect x="11" y="8" width="1" height="1" fill="#cccccc"/><rect x="12" y="8" width="1" height="1" fill="#808080"/><rect x="13" y="8" width="1" height="1" fill="#fff"/><rect x="2" y="9" width="2" height="1" fill="#fff"/><rect x="4" y="9" width="1" height="1" fill="#808080"/><rect x="5" y="9" width="7" height="1" fill="#cccccc"/><rect x="12" y="9" width="1" height="1" fill="#808080"/><rect x="13" y="9" width="1" height="1" fill="#fff"/><rect x="4" y="10" width="1" height="1" fill="#808080"/><rect x="5" y="10" width="1" height="1" fill="#cccccc"/><rect x="6" y="10" width="5" height="1" fill="#808080"/><rect x="11" y="10" width="1" height="1" fill="#cccccc"/><rect x="12" y="10" width="1" height="1" fill="#808080"/><rect x="13" y="10" width="1" height="1" fill="#fff"/><rect x="4" y="11" width="1" height="1" fill="#808080"/><rect x="5" y="11" width="7" height="1" fill="#cccccc"/><rect x="12" y="11" width="1" height="1" fill="#808080"/><rect x="13" y="11" width="1" height="1" fill="#fff"/><rect x="4" y="12" width="9" height="1" fill="#808080"/><rect x="13" y="12" width="1" height="1" fill="#fff"/><rect x="5" y="13" width="9" height="1" fill="#fff"/></svg>
<svg class="a" style="left:170px;top:59px;" width="15" height="14" viewBox="0 0 15 14" shape-rendering="crispEdges"><rect x="4" y="0" width="5" height="1" fill="#808080"/><rect x="2" y="1" width="3" height="1" fill="#808080"/><rect x="5" y="1" width="3" height="1" fill="#cccccc"/><rect x="8" y="1" width="3" height="1" fill="#808080"/><rect x="1" y="2" width="11" height="1" fill="#808080"/><rect x="1" y="3" width="2" height="1" fill="#808080"/><rect x="3" y="3" width="7" height="1" fill="#cccccc"/><rect x="10" y="3" width="2" height="1" fill="#808080"/><rect x="1" y="4" width="11" height="1" fill="#808080"/><rect x="1" y="5" width="12" height="1" fill="#808080"/><rect x="1" y="6" width="8" height="1" fill="#808080"/><rect x="9" y="6" width="4" height="1" fill="#cccccc"/><rect x="13" y="6" width="1" height="1" fill="#808080"/><rect x="1" y="7" width="8" height="1" fill="#808080"/><rect x="9" y="7" width="1" height="1" fill="#cccccc"/><rect x="10" y="7" width="3" height="1" fill="#808080"/><rect x="13" y="7" width="1" height="1" fill="#cccccc"/><rect x="14" y="7" width="1" height="1" fill="#808080"/><rect x="1" y="8" width="8" height="1" fill="#808080"/><rect x="9" y="8" width="5" height="1" fill="#cccccc"/><rect x="14" y="8" width="1" height="1" fill="#808080"/><rect x="1" y="9" width="8" height="1" fill="#808080"/><rect x="9" y="9" width="1" height="1" fill="#cccccc"/><rect x="10" y="9" width="3" height="1" fill="#808080"/><rect x="13" y="9" width="1" height="1" fill="#cccccc"/><rect x="14" y="9" width="1" height="1" fill="#808080"/><rect x="1" y="10" width="8" height="1" fill="#808080"/><rect x="9" y="10" width="5" height="1" fill="#cccccc"/><rect x="14" y="10" width="1" height="1" fill="#808080"/><rect x="1" y="11" width="14" height="1" fill="#808080"/><rect x="2" y="12" width="7" height="1" fill="#fff"/><rect x="9" y="12" width="1" height="1" fill="#808080"/><rect x="10" y="12" width="5" height="1" fill="#fff"/><rect x="10" y="13" width="5" height="1" fill="#fff"/></svg>
<div class="a" style="left:194px;top:55px;width:1px;height:22px;background:#808080"></div>
<div class="a" style="left:195px;top:55px;width:1px;height:22px;background:#fff"></div>
<svg class="a" style="left:201px;top:59px;" width="17" height="13" viewBox="0 0 17 13" shape-rendering="crispEdges"><rect x="7" y="0" width="4" height="1" fill="#808080"/><rect x="5" y="1" width="2" height="1" fill="#808080"/><rect x="7" y="1" width="4" height="1" fill="#fff"/><rect x="11" y="1" width="2" height="1" fill="#808080"/><rect x="1" y="2" width="2" height="1" fill="#808080"/><rect x="4" y="2" width="1" height="1" fill="#808080"/><rect x="5" y="2" width="1" height="1" fill="#fff"/><rect x="12" y="2" width="1" height="1" fill="#808080"/><rect x="13" y="2" width="1" height="1" fill="#fff"/><rect x="1" y="3" width="3" height="1" fill="#808080"/><rect x="4" y="3" width="1" height="1" fill="#fff"/><rect x="13" y="3" width="1" height="1" fill="#808080"/><rect x="14" y="3" width="1" height="1" fill="#fff"/><rect x="1" y="4" width="3" height="1" fill="#808080"/><rect x="4" y="4" width="1" height="1" fill="#fff"/><rect x="13" y="4" width="1" height="1" fill="#808080"/><rect x="14" y="4" width="1" height="1" fill="#fff"/><rect x="1" y="5" width="4" height="1" fill="#808080"/><rect x="5" y="5" width="1" height="1" fill="#fff"/><rect x="13" y="5" width="1" height="1" fill="#808080"/><rect x="14" y="5" width="1" height="1" fill="#fff"/><rect x="1" y="6" width="5" height="1" fill="#fff"/><rect x="13" y="6" width="1" height="1" fill="#808080"/><rect x="14" y="6" width="1" height="1" fill="#fff"/><rect x="12" y="7" width="1" height="1" fill="#808080"/><rect x="13" y="7" width="1" height="1" fill="#fff"/><rect x="11" y="8" width="1" height="1" fill="#808080"/><rect x="12" y="8" width="1" height="1" fill="#fff"/><rect x="11" y="9" width="1" height="1" fill="#fff"/><rect x="0" y="10" width="10" height="1" fill="#808080"/><rect x="11" y="10" width="1" height="1" fill="#808080"/><rect x="13" y="10" width="1" height="1" fill="#808080"/><rect x="15" y="10" width="1" height="1" fill="#808080"/><rect x="0" y="11" width="10" height="1" fill="#808080"/><rect x="10" y="11" width="1" height="1" fill="#fff"/><rect x="12" y="11" width="1" height="1" fill="#fff"/><rect x="14" y="11" width="1" height="1" fill="#fff"/><rect x="16" y="11" width="1" height="1" fill="#fff"/><rect x="1" y="12" width="10" height="1" fill="#fff"/></svg>
<svg class="a" style="left:222px;top:64px;" width="9" height="5" viewBox="0 0 9 5" shape-rendering="crispEdges"><rect x="0" y="0" width="8" height="1" fill="#808080"/><rect x="8" y="0" width="1" height="1" fill="#fff"/><rect x="1" y="1" width="6" height="1" fill="#808080"/><rect x="7" y="1" width="1" height="1" fill="#fff"/><rect x="2" y="2" width="4" height="1" fill="#808080"/><rect x="6" y="2" width="1" height="1" fill="#fff"/><rect x="3" y="3" width="2" height="1" fill="#808080"/><rect x="5" y="3" width="1" height="1" fill="#fff"/><rect x="4" y="4" width="1" height="1" fill="#fff"/></svg>
<svg class="a" style="left:237px;top:59px;" width="17" height="13" viewBox="0 0 17 13" shape-rendering="crispEdges"><rect x="5" y="0" width="4" height="1" fill="#808080"/><rect x="3" y="1" width="2" height="1" fill="#808080"/><rect x="5" y="1" width="4" height="1" fill="#fff"/><rect x="9" y="1" width="2" height="1" fill="#808080"/><rect x="2" y="2" width="1" height="1" fill="#808080"/><rect x="3" y="2" width="1" height="1" fill="#fff"/><rect x="10" y="2" width="1" height="1" fill="#808080"/><rect x="11" y="2" width="1" height="1" fill="#fff"/><rect x="13" y="2" width="2" height="1" fill="#808080"/><rect x="1" y="3" width="1" height="1" fill="#808080"/><rect x="2" y="3" width="1" height="1" fill="#fff"/><rect x="11" y="3" width="3" height="1" fill="#808080"/><rect x="14" y="3" width="1" height="1" fill="#fff"/><rect x="1" y="4" width="1" height="1" fill="#808080"/><rect x="2" y="4" width="1" height="1" fill="#fff"/><rect x="11" y="4" width="3" height="1" fill="#808080"/><rect x="14" y="4" width="1" height="1" fill="#fff"/><rect x="1" y="5" width="1" height="1" fill="#808080"/><rect x="2" y="5" width="1" height="1" fill="#fff"/><rect x="10" y="5" width="4" height="1" fill="#808080"/><rect x="14" y="5" width="1" height="1" fill="#fff"/><rect x="1" y="6" width="1" height="1" fill="#808080"/><rect x="2" y="6" width="1" height="1" fill="#fff"/><rect x="10" y="6" width="5" height="1" fill="#fff"/><rect x="2" y="7" width="1" height="1" fill="#808080"/><rect x="3" y="7" width="1" height="1" fill="#fff"/><rect x="3" y="8" width="1" height="1" fill="#808080"/><rect x="4" y="8" width="1" height="1" fill="#fff"/><rect x="4" y="9" width="1" height="1" fill="#fff"/><rect x="0" y="10" width="1" height="1" fill="#808080"/><rect x="2" y="10" width="1" height="1" fill="#808080"/><rect x="4" y="10" width="1" height="1" fill="#808080"/><rect x="6" y="10" width="10" height="1" fill="#808080"/><rect x="0" y="11" width="1" height="1" fill="#808080"/><rect x="1" y="11" width="1" height="1" fill="#fff"/><rect x="3" y="11" width="1" height="1" fill="#fff"/><rect x="5" y="11" width="1" height="1" fill="#fff"/><rect x="7" y="11" width="9" height="1" fill="#808080"/><rect x="16" y="11" width="1" height="1" fill="#fff"/><rect x="7" y="12" width="10" height="1" fill="#fff"/></svg>
<svg class="a" style="left:259px;top:64px;" width="9" height="5" viewBox="0 0 9 5" shape-rendering="crispEdges"><rect x="0" y="0" width="8" height="1" fill="#808080"/><rect x="8" y="0" width="1" height="1" fill="#fff"/><rect x="1" y="1" width="6" height="1" fill="#808080"/><rect x="7" y="1" width="1" height="1" fill="#fff"/><rect x="2" y="2" width="4" height="1" fill="#808080"/><rect x="6" y="2" width="1" height="1" fill="#fff"/><rect x="3" y="3" width="2" height="1" fill="#808080"/><rect x="5" y="3" width="1" height="1" fill="#fff"/><rect x="4" y="4" width="1" height="1" fill="#fff"/></svg>
<div class="a" style="left:275px;top:55px;width:1px;height:22px;background:#808080"></div>
<div class="a" style="left:276px;top:55px;width:1px;height:22px;background:#fff"></div>
<div class="a" style="left:279px;top:55px;width:22px;height:22px;border:1px solid;border-color:#808080 #fff #fff #808080"></div>
<div class="a" style="left:280px;top:56px;width:20px;height:20px;"></div>
<div class="a dither" style="left:280px;top:56px;width:20px;height:20px"></div>
<div class="a" style="left:302px;top:55px;width:22px;height:22px;border:1px solid;border-color:#808080 #fff #fff #808080"></div>
<div class="a" style="left:303px;top:56px;width:20px;height:20px;"></div>
<div class="a dither" style="left:303px;top:56px;width:20px;height:20px"></div>
<svg class="a" style="left:283px;top:60px;" width="15" height="13" viewBox="0 0 15 13" shape-rendering="crispEdges"><rect x="0" y="0" width="14" height="1" fill="#000080"/><rect x="0" y="1" width="1" height="1" fill="#000080"/><rect x="1" y="1" width="1" height="1" fill="#fff"/><rect x="2" y="1" width="12" height="1" fill="#000080"/><rect x="0" y="2" width="14" height="1" fill="#000080"/><rect x="0" y="3" width="1" height="1" fill="#000"/><rect x="1" y="3" width="1" height="1" fill="#fff"/><rect x="2" y="3" width="1" height="1" fill="#000"/><rect x="3" y="3" width="10" height="1" fill="#fff"/><rect x="13" y="3" width="1" height="1" fill="#000"/><rect x="0" y="4" width="1" height="1" fill="#000"/><rect x="1" y="4" width="1" height="1" fill="#fff"/><rect x="2" y="4" width="1" height="1" fill="#000"/><rect x="3" y="4" width="10" height="1" fill="#fff"/><rect x="13" y="4" width="1" height="1" fill="#000"/><rect x="0" y="5" width="1" height="1" fill="#000"/><rect x="1" y="5" width="1" height="1" fill="#fff"/><rect x="2" y="5" width="1" height="1" fill="#000"/><rect x="3" y="5" width="10" height="1" fill="#fff"/><rect x="13" y="5" width="1" height="1" fill="#000"/><rect x="0" y="6" width="1" height="1" fill="#000"/><rect x="1" y="6" width="1" height="1" fill="#fff"/><rect x="2" y="6" width="1" height="1" fill="#000"/><rect x="3" y="6" width="3" height="1" fill="#fff"/><rect x="6" y="6" width="4" height="1" fill="#000"/><rect x="10" y="6" width="3" height="1" fill="#fff"/><rect x="13" y="6" width="1" height="1" fill="#000"/><rect x="0" y="7" width="1" height="1" fill="#000"/><rect x="1" y="7" width="1" height="1" fill="#fff"/><rect x="2" y="7" width="1" height="1" fill="#000"/><rect x="3" y="7" width="2" height="1" fill="#fff"/><rect x="5" y="7" width="1" height="1" fill="#000"/><rect x="6" y="7" width="4" height="1" fill="#ffff99"/><rect x="10" y="7" width="5" height="1" fill="#000"/><rect x="0" y="8" width="1" height="1" fill="#000"/><rect x="1" y="8" width="1" height="1" fill="#fff"/><rect x="2" y="8" width="1" height="1" fill="#000"/><rect x="3" y="8" width="1" height="1" fill="#fff"/><rect x="4" y="8" width="1" height="1" fill="#000"/><rect x="5" y="8" width="9" height="1" fill="#ffff99"/><rect x="14" y="8" width="1" height="1" fill="#000"/><rect x="0" y="9" width="1" height="1" fill="#000"/><rect x="1" y="9" width="1" height="1" fill="#fff"/><rect x="2" y="9" width="1" height="1" fill="#000"/><rect x="3" y="9" width="1" height="1" fill="#fff"/><rect x="4" y="9" width="1" height="1" fill="#000"/><rect x="5" y="9" width="9" height="1" fill="#ffff99"/><rect x="14" y="9" width="1" height="1" fill="#000"/><rect x="0" y="10" width="5" height="1" fill="#000"/><rect x="5" y="10" width="9" height="1" fill="#ffff99"/><rect x="14" y="10" width="1" height="1" fill="#000"/><rect x="5" y="11" width="1" height="1" fill="#000"/><rect x="6" y="11" width="8" height="1" fill="#ffff99"/><rect x="14" y="11" width="1" height="1" fill="#000"/><rect x="5" y="12" width="10" height="1" fill="#000"/></svg>
<svg class="a" style="left:307px;top:59px;" width="14" height="13" viewBox="0 0 14 13" shape-rendering="crispEdges"><rect x="0" y="0" width="14" height="1" fill="#000080"/><rect x="0" y="1" width="14" height="1" fill="#000080"/><rect x="0" y="2" width="1" height="1" fill="#000"/><rect x="1" y="2" width="12" height="1" fill="#fff"/><rect x="13" y="2" width="1" height="1" fill="#000"/><rect x="0" y="3" width="1" height="1" fill="#000"/><rect x="1" y="3" width="2" height="1" fill="#fff"/><rect x="3" y="3" width="4" height="1" fill="#000"/><rect x="7" y="3" width="6" height="1" fill="#fff"/><rect x="13" y="3" width="1" height="1" fill="#000"/><rect x="0" y="4" width="1" height="1" fill="#000"/><rect x="1" y="4" width="1" height="1" fill="#fff"/><rect x="2" y="4" width="1" height="1" fill="#000"/><rect x="3" y="4" width="4" height="1" fill="#808000"/><rect x="7" y="4" width="2" height="1" fill="#000"/><rect x="9" y="4" width="4" height="1" fill="#fff"/><rect x="13" y="4" width="1" height="1" fill="#000"/><rect x="0" y="5" width="1" height="1" fill="#000"/><rect x="1" y="5" width="2" height="1" fill="#fff"/><rect x="3" y="5" width="2" height="1" fill="#000"/><rect x="5" y="5" width="4" height="1" fill="#808000"/><rect x="9" y="5" width="1" height="1" fill="#000"/><rect x="10" y="5" width="3" height="1" fill="#fff"/><rect x="13" y="5" width="1" height="1" fill="#000"/><rect x="0" y="6" width="1" height="1" fill="#000"/><rect x="1" y="6" width="4" height="1" fill="#fff"/><rect x="5" y="6" width="2" height="1" fill="#000"/><rect x="7" y="6" width="3" height="1" fill="#808000"/><rect x="10" y="6" width="1" height="1" fill="#000"/><rect x="11" y="6" width="2" height="1" fill="#fff"/><rect x="13" y="6" width="1" height="1" fill="#000"/><rect x="0" y="7" width="1" height="1" fill="#000"/><rect x="1" y="7" width="3" height="1" fill="#fff"/><rect x="4" y="7" width="1" height="1" fill="#000"/><rect x="5" y="7" width="1" height="1" fill="#800000"/><rect x="6" y="7" width="3" height="1" fill="#000"/><rect x="9" y="7" width="2" height="1" fill="#808000"/><rect x="11" y="7" width="1" height="1" fill="#000"/><rect x="12" y="7" width="1" height="1" fill="#fff"/><rect x="13" y="7" width="1" height="1" fill="#000"/><rect x="0" y="8" width="1" height="1" fill="#000"/><rect x="1" y="8" width="2" height="1" fill="#fff"/><rect x="3" y="8" width="1" height="1" fill="#000"/><rect x="4" y="8" width="1" height="1" fill="#800000"/><rect x="5" y="8" width="1" height="1" fill="#000"/><rect x="6" y="8" width="3" height="1" fill="#fff"/><rect x="9" y="8" width="2" height="1" fill="#000"/><rect x="11" y="8" width="2" height="1" fill="#fff"/><rect x="13" y="8" width="1" height="1" fill="#000"/><rect x="0" y="9" width="1" height="1" fill="#000"/><rect x="1" y="9" width="1" height="1" fill="#fff"/><rect x="2" y="9" width="1" height="1" fill="#000"/><rect x="3" y="9" width="1" height="1" fill="#800000"/><rect x="4" y="9" width="1" height="1" fill="#000"/><rect x="5" y="9" width="8" height="1" fill="#fff"/><rect x="13" y="9" width="1" height="1" fill="#000"/><rect x="0" y="10" width="2" height="1" fill="#000"/><rect x="2" y="10" width="1" height="1" fill="#800000"/><rect x="3" y="10" width="11" height="1" fill="#000"/><rect x="1" y="11" width="1" height="1" fill="#000"/><rect x="2" y="11" width="1" height="1" fill="#800000"/><rect x="3" y="11" width="1" height="1" fill="#000"/><rect x="0" y="12" width="1" height="1" fill="#000"/><rect x="1" y="12" width="1" height="1" fill="#800000"/><rect x="2" y="12" width="1" height="1" fill="#000"/></svg>
<svg class="a" style="left:328px;top:58px;" width="17" height="15" viewBox="0 0 17 15" shape-rendering="crispEdges"><rect x="0" y="0" width="10" height="1" fill="#000080"/><rect x="15" y="0" width="1" height="1" fill="#0000ff"/><rect x="0" y="1" width="1" height="1" fill="#000080"/><rect x="1" y="1" width="1" height="1" fill="#fff"/><rect x="2" y="1" width="8" height="1" fill="#000080"/><rect x="14" y="1" width="2" height="1" fill="#0000ff"/><rect x="0" y="2" width="1" height="1" fill="#000080"/><rect x="1" y="2" width="8" height="1" fill="#fff"/><rect x="9" y="2" width="1" height="1" fill="#000080"/><rect x="13" y="2" width="1" height="1" fill="#0000ff"/><rect x="15" y="2" width="1" height="1" fill="#0000ff"/><rect x="0" y="3" width="1" height="1" fill="#000080"/><rect x="1" y="3" width="8" height="1" fill="#fff"/><rect x="9" y="3" width="1" height="1" fill="#000080"/><rect x="12" y="3" width="1" height="1" fill="#0000ff"/><rect x="0" y="4" width="1" height="1" fill="#000080"/><rect x="1" y="4" width="1" height="1" fill="#fff"/><rect x="2" y="4" width="10" height="1" fill="#000080"/><rect x="0" y="5" width="1" height="1" fill="#000080"/><rect x="1" y="5" width="1" height="1" fill="#fff"/><rect x="2" y="5" width="1" height="1" fill="#000080"/><rect x="3" y="5" width="1" height="1" fill="#fff"/><rect x="4" y="5" width="8" height="1" fill="#000080"/><rect x="0" y="6" width="3" height="1" fill="#000080"/><rect x="3" y="6" width="8" height="1" fill="#fff"/><rect x="11" y="6" width="1" height="1" fill="#000080"/><rect x="2" y="7" width="1" height="1" fill="#000080"/><rect x="3" y="7" width="8" height="1" fill="#fff"/><rect x="11" y="7" width="1" height="1" fill="#000080"/><rect x="2" y="8" width="1" height="1" fill="#000080"/><rect x="3" y="8" width="1" height="1" fill="#fff"/><rect x="4" y="8" width="10" height="1" fill="#000080"/><rect x="2" y="9" width="1" height="1" fill="#000080"/><rect x="3" y="9" width="1" height="1" fill="#fff"/><rect x="4" y="9" width="1" height="1" fill="#000080"/><rect x="5" y="9" width="1" height="1" fill="#fff"/><rect x="6" y="9" width="8" height="1" fill="#000080"/><rect x="2" y="10" width="3" height="1" fill="#000080"/><rect x="5" y="10" width="8" height="1" fill="#fff"/><rect x="13" y="10" width="1" height="1" fill="#000080"/><rect x="4" y="11" width="1" height="1" fill="#000080"/><rect x="5" y="11" width="8" height="1" fill="#fff"/><rect x="13" y="11" width="1" height="1" fill="#000080"/><rect x="4" y="12" width="1" height="1" fill="#000080"/><rect x="5" y="12" width="8" height="1" fill="#fff"/><rect x="13" y="12" width="1" height="1" fill="#000080"/><rect x="4" y="13" width="1" height="1" fill="#000080"/><rect x="5" y="13" width="8" height="1" fill="#fff"/><rect x="13" y="13" width="1" height="1" fill="#000080"/><rect x="4" y="14" width="10" height="1" fill="#000080"/></svg>
<div class="a" style="left:352px;top:55px;width:1px;height:22px;background:#808080"></div>
<div class="a" style="left:353px;top:55px;width:1px;height:22px;background:#fff"></div>
<svg class="a" style="left:359px;top:59px;" width="16" height="14" viewBox="0 0 16 14" shape-rendering="crispEdges"><rect x="1" y="0" width="4" height="1" fill="#000"/><rect x="0" y="1" width="1" height="1" fill="#000"/><rect x="1" y="1" width="4" height="1" fill="#ffff99"/><rect x="5" y="1" width="4" height="1" fill="#000"/><rect x="0" y="2" width="1" height="1" fill="#000"/><rect x="1" y="2" width="1" height="1" fill="#ffff99"/><rect x="2" y="2" width="1" height="1" fill="#000"/><rect x="3" y="2" width="6" height="1" fill="#ffff99"/><rect x="9" y="2" width="1" height="1" fill="#000"/><rect x="0" y="3" width="1" height="1" fill="#000"/><rect x="1" y="3" width="2" height="1" fill="#ffff99"/><rect x="3" y="3" width="1" height="1" fill="#000"/><rect x="4" y="3" width="4" height="1" fill="#ffff99"/><rect x="8" y="3" width="1" height="1" fill="#000"/><rect x="9" y="3" width="1" height="1" fill="#ffff99"/><rect x="10" y="3" width="1" height="1" fill="#000"/><rect x="0" y="4" width="1" height="1" fill="#000"/><rect x="1" y="4" width="3" height="1" fill="#ffff99"/><rect x="4" y="4" width="2" height="1" fill="#000"/><rect x="6" y="4" width="1" height="1" fill="#ffff99"/><rect x="7" y="4" width="1" height="1" fill="#000"/><rect x="10" y="4" width="1" height="1" fill="#000"/><rect x="12" y="4" width="1" height="1" fill="#000"/><rect x="0" y="5" width="1" height="1" fill="#000"/><rect x="1" y="5" width="6" height="1" fill="#ffff99"/><rect x="7" y="5" width="2" height="1" fill="#000"/><rect x="10" y="5" width="3" height="1" fill="#000"/><rect x="1" y="6" width="12" height="1" fill="#000"/><rect x="6" y="7" width="1" height="1" fill="#000"/><rect x="7" y="7" width="1" height="1" fill="#fff"/><rect x="8" y="7" width="3" height="1" fill="#000"/><rect x="11" y="7" width="1" height="1" fill="#fff"/><rect x="12" y="7" width="2" height="1" fill="#000"/><rect x="5" y="8" width="10" height="1" fill="#000"/><rect x="5" y="9" width="2" height="1" fill="#000"/><rect x="7" y="9" width="1" height="1" fill="#fff"/><rect x="8" y="9" width="4" height="1" fill="#000"/><rect x="12" y="9" width="1" height="1" fill="#fff"/><rect x="13" y="9" width="2" height="1" fill="#000"/><rect x="5" y="10" width="3" height="1" fill="#000"/><rect x="12" y="10" width="3" height="1" fill="#000"/><rect x="5" y="11" width="3" height="1" fill="#000"/><rect x="12" y="11" width="3" height="1" fill="#000"/><rect x="5" y="12" width="1" height="1" fill="#000"/><rect x="6" y="12" width="1" height="1" fill="#fff"/><rect x="7" y="12" width="1" height="1" fill="#000"/><rect x="12" y="12" width="1" height="1" fill="#000"/><rect x="13" y="12" width="1" height="1" fill="#fff"/><rect x="14" y="12" width="1" height="1" fill="#000"/><rect x="5" y="13" width="3" height="1" fill="#000"/><rect x="12" y="13" width="3" height="1" fill="#000"/></svg>
<div class="a" style="left:379px;top:55px;width:199px;height:21px;border:1px solid;border-color:#808080 #fff #fff #808080"></div>
<div class="a" style="left:380px;top:56px;width:197px;height:19px;border:1px solid;border-color:#404040 #cccccc #cccccc #404040;background:#fff"></div>
<div class="a " style="left:383px;top:58px;white-space:pre;font-weight:bold;font-size:12px;line-height:14px;letter-spacing:0.1px">getstring</div>
<div class="a" style="left:560px;top:57px;width:16px;height:17px;background:#cccccc;box-shadow:inset -1px -1px 0 #000,inset 1px 1px 0 #fff,inset -2px -2px 0 #808080"></div>
<svg class="a" style="left:563px;top:63px;" width="7" height="4" viewBox="0 0 7 4" shape-rendering="crispEdges"><rect x="0" y="0" width="7" height="1" fill="#000"/><rect x="1" y="1" width="5" height="1" fill="#000"/><rect x="2" y="2" width="3" height="1" fill="#000"/><rect x="3" y="3" width="1" height="1" fill="#000"/></svg>
<div class="a" style="left:582px;top:55px;width:1px;height:22px;background:#808080"></div>
<div class="a" style="left:583px;top:55px;width:1px;height:22px;background:#fff"></div>
<svg class="a" style="left:589px;top:58px;" width="17" height="17" viewBox="0 0 17 17" shape-rendering="crispEdges"><rect x="1" y="0" width="3" height="1" fill="#000"/><rect x="0" y="1" width="1" height="1" fill="#000"/><rect x="1" y="1" width="3" height="1" fill="#ffff00"/><rect x="4" y="1" width="1" height="1" fill="#000"/><rect x="0" y="2" width="1" height="1" fill="#000"/><rect x="1" y="2" width="1" height="1" fill="#ffff00"/><rect x="2" y="2" width="1" height="1" fill="#000"/><rect x="3" y="2" width="1" height="1" fill="#ffff00"/><rect x="4" y="2" width="1" height="1" fill="#000"/><rect x="1" y="3" width="2" height="1" fill="#000"/><rect x="3" y="3" width="1" height="1" fill="#ffff00"/><rect x="4" y="3" width="1" height="1" fill="#000"/><rect x="2" y="4" width="1" height="1" fill="#000"/><rect x="3" y="4" width="1" height="1" fill="#ffff00"/><rect x="4" y="4" width="1" height="1" fill="#000"/><rect x="1" y="5" width="1" height="1" fill="#000"/><rect x="2" y="5" width="1" height="1" fill="#ffff00"/><rect x="3" y="5" width="1" height="1" fill="#000"/><rect x="1" y="6" width="1" height="1" fill="#000"/><rect x="2" y="6" width="1" height="1" fill="#ffff00"/><rect x="3" y="6" width="1" height="1" fill="#000"/><rect x="2" y="7" width="1" height="1" fill="#000"/><rect x="6" y="7" width="2" height="1" fill="#000"/><rect x="12" y="7" width="2" height="1" fill="#000"/><rect x="1" y="8" width="1" height="1" fill="#000"/><rect x="2" y="8" width="1" height="1" fill="#ffff00"/><rect x="3" y="8" width="1" height="1" fill="#000"/><rect x="5" y="8" width="4" height="1" fill="#000"/><rect x="11" y="8" width="4" height="1" fill="#000"/><rect x="2" y="9" width="1" height="1" fill="#000"/><rect x="5" y="9" width="1" height="1" fill="#000"/><rect x="6" y="9" width="1" height="1" fill="#fff"/><rect x="7" y="9" width="5" height="1" fill="#000"/><rect x="12" y="9" width="1" height="1" fill="#fff"/><rect x="13" y="9" width="2" height="1" fill="#000"/><rect x="4" y="10" width="12" height="1" fill="#000"/><rect x="4" y="11" width="5" height="1" fill="#000"/><rect x="11" y="11" width="5" height="1" fill="#000"/><rect x="4" y="12" width="1" height="1" fill="#000"/><rect x="5" y="12" width="1" height="1" fill="#fff"/><rect x="6" y="12" width="3" height="1" fill="#000"/><rect x="11" y="12" width="1" height="1" fill="#000"/><rect x="12" y="12" width="1" height="1" fill="#fff"/><rect x="13" y="12" width="3" height="1" fill="#000"/><rect x="4" y="13" width="5" height="1" fill="#000"/><rect x="11" y="13" width="5" height="1" fill="#000"/><rect x="4" y="14" width="5" height="1" fill="#000"/><rect x="11" y="14" width="5" height="1" fill="#000"/><rect x="5" y="15" width="3" height="1" fill="#000"/><rect x="12" y="15" width="3" height="1" fill="#000"/></svg>
<div class="a" style="left:613px;top:54px;width:3px;height:25px;border:1px solid;border-color:#fff #808080 #808080 #fff"></div>
<div class="a" style="left:617px;top:54px;width:3px;height:25px;border:1px solid;border-color:#fff #808080 #808080 #fff"></div>
<svg class="a" style="left:622px;top:61px;" width="21" height="10" viewBox="0 0 21 10" shape-rendering="crispEdges"><rect x="0" y="0" width="5" height="1" fill="#808080"/><rect x="6" y="0" width="4" height="1" fill="#808080"/><rect x="14" y="0" width="4" height="1" fill="#808080"/><rect x="19" y="0" width="1" height="1" fill="#808080"/><rect x="0" y="1" width="2" height="1" fill="#808080"/><rect x="2" y="1" width="4" height="1" fill="#fff"/><rect x="6" y="1" width="2" height="1" fill="#808080"/><rect x="8" y="1" width="1" height="1" fill="#fff"/><rect x="9" y="1" width="2" height="1" fill="#808080"/><rect x="14" y="1" width="1" height="1" fill="#808080"/><rect x="15" y="1" width="4" height="1" fill="#fff"/><rect x="19" y="1" width="1" height="1" fill="#808080"/><rect x="20" y="1" width="1" height="1" fill="#fff"/><rect x="0" y="2" width="2" height="1" fill="#808080"/><rect x="2" y="2" width="1" height="1" fill="#fff"/><rect x="6" y="2" width="2" height="1" fill="#808080"/><rect x="8" y="2" width="1" height="1" fill="#fff"/><rect x="9" y="2" width="2" height="1" fill="#808080"/><rect x="11" y="2" width="1" height="1" fill="#fff"/><rect x="14" y="2" width="1" height="1" fill="#808080"/><rect x="15" y="2" width="1" height="1" fill="#fff"/><rect x="19" y="2" width="1" height="1" fill="#808080"/><rect x="20" y="2" width="1" height="1" fill="#fff"/><rect x="0" y="3" width="4" height="1" fill="#808080"/><rect x="7" y="3" width="3" height="1" fill="#808080"/><rect x="10" y="3" width="2" height="1" fill="#fff"/><rect x="14" y="3" width="3" height="1" fill="#808080"/><rect x="19" y="3" width="1" height="1" fill="#808080"/><rect x="20" y="3" width="1" height="1" fill="#fff"/><rect x="0" y="4" width="2" height="1" fill="#808080"/><rect x="2" y="4" width="3" height="1" fill="#fff"/><rect x="6" y="4" width="2" height="1" fill="#808080"/><rect x="8" y="4" width="1" height="1" fill="#fff"/><rect x="9" y="4" width="2" height="1" fill="#808080"/><rect x="15" y="4" width="2" height="1" fill="#fff"/><rect x="17" y="4" width="1" height="1" fill="#808080"/><rect x="19" y="4" width="1" height="1" fill="#808080"/><rect x="20" y="4" width="1" height="1" fill="#fff"/><rect x="0" y="5" width="2" height="1" fill="#808080"/><rect x="2" y="5" width="1" height="1" fill="#fff"/><rect x="6" y="5" width="2" height="1" fill="#808080"/><rect x="8" y="5" width="1" height="1" fill="#fff"/><rect x="9" y="5" width="2" height="1" fill="#808080"/><rect x="11" y="5" width="1" height="1" fill="#fff"/><rect x="17" y="5" width="1" height="1" fill="#808080"/><rect x="18" y="5" width="1" height="1" fill="#fff"/><rect x="19" y="5" width="1" height="1" fill="#808080"/><rect x="20" y="5" width="1" height="1" fill="#fff"/><rect x="0" y="6" width="2" height="1" fill="#808080"/><rect x="2" y="6" width="1" height="1" fill="#fff"/><rect x="6" y="6" width="2" height="1" fill="#808080"/><rect x="8" y="6" width="1" height="1" fill="#fff"/><rect x="9" y="6" width="2" height="1" fill="#808080"/><rect x="11" y="6" width="1" height="1" fill="#fff"/><rect x="17" y="6" width="1" height="1" fill="#808080"/><rect x="18" y="6" width="1" height="1" fill="#fff"/><rect x="19" y="6" width="1" height="1" fill="#808080"/><rect x="20" y="6" width="1" height="1" fill="#fff"/><rect x="0" y="7" width="2" height="1" fill="#808080"/><rect x="2" y="7" width="1" height="1" fill="#fff"/><rect x="6" y="7" width="2" height="1" fill="#808080"/><rect x="8" y="7" width="1" height="1" fill="#fff"/><rect x="9" y="7" width="2" height="1" fill="#808080"/><rect x="11" y="7" width="1" height="1" fill="#fff"/><rect x="12" y="7" width="3" height="1" fill="#808080"/><rect x="17" y="7" width="1" height="1" fill="#808080"/><rect x="18" y="7" width="1" height="1" fill="#fff"/><rect x="19" y="7" width="1" height="1" fill="#808080"/><rect x="20" y="7" width="1" height="1" fill="#fff"/><rect x="0" y="8" width="2" height="1" fill="#808080"/><rect x="2" y="8" width="1" height="1" fill="#fff"/><rect x="7" y="8" width="3" height="1" fill="#808080"/><rect x="10" y="8" width="2" height="1" fill="#fff"/><rect x="12" y="8" width="2" height="1" fill="#808080"/><rect x="14" y="8" width="1" height="1" fill="#fff"/><rect x="15" y="8" width="2" height="1" fill="#808080"/><rect x="18" y="8" width="1" height="1" fill="#fff"/><rect x="19" y="8" width="1" height="1" fill="#808080"/><rect x="20" y="8" width="1" height="1" fill="#fff"/><rect x="1" y="9" width="2" height="1" fill="#fff"/><rect x="8" y="9" width="3" height="1" fill="#fff"/><rect x="13" y="9" width="2" height="1" fill="#fff"/><rect x="16" y="9" width="2" height="1" fill="#fff"/><rect x="20" y="9" width="1" height="1" fill="#fff"/></svg>
<svg class="a" style="left:646px;top:58px;" width="16" height="15" viewBox="0 0 16 15" shape-rendering="crispEdges"><rect x="6" y="0" width="3" height="1" fill="#808080"/><rect x="5" y="1" width="5" height="1" fill="#808080"/><rect x="4" y="2" width="6" height="1" fill="#808080"/><rect x="10" y="2" width="1" height="1" fill="#fff"/><rect x="1" y="3" width="1" height="1" fill="#808080"/><rect x="3" y="3" width="7" height="1" fill="#808080"/><rect x="10" y="3" width="1" height="1" fill="#fff"/><rect x="0" y="4" width="1" height="1" fill="#808080"/><rect x="1" y="4" width="3" height="1" fill="#fff"/><rect x="4" y="4" width="7" height="1" fill="#808080"/><rect x="11" y="4" width="1" height="1" fill="#fff"/><rect x="1" y="5" width="1" height="1" fill="#fff"/><rect x="3" y="5" width="1" height="1" fill="#fff"/><rect x="4" y="5" width="7" height="1" fill="#808080"/><rect x="11" y="5" width="1" height="1" fill="#fff"/><rect x="0" y="6" width="1" height="1" fill="#808080"/><rect x="1" y="6" width="1" height="1" fill="#fff"/><rect x="3" y="6" width="1" height="1" fill="#fff"/><rect x="4" y="6" width="8" height="1" fill="#808080"/><rect x="12" y="6" width="1" height="1" fill="#fff"/><rect x="1" y="7" width="1" height="1" fill="#fff"/><rect x="3" y="7" width="1" height="1" fill="#fff"/><rect x="4" y="7" width="9" height="1" fill="#808080"/><rect x="13" y="7" width="1" height="1" fill="#fff"/><rect x="0" y="8" width="1" height="1" fill="#808080"/><rect x="1" y="8" width="1" height="1" fill="#fff"/><rect x="3" y="8" width="1" height="1" fill="#fff"/><rect x="4" y="8" width="10" height="1" fill="#808080"/><rect x="14" y="8" width="1" height="1" fill="#fff"/><rect x="1" y="9" width="1" height="1" fill="#fff"/><rect x="3" y="9" width="1" height="1" fill="#fff"/><rect x="4" y="9" width="11" height="1" fill="#808080"/><rect x="15" y="9" width="1" height="1" fill="#fff"/><rect x="0" y="10" width="1" height="1" fill="#808080"/><rect x="1" y="10" width="2" height="1" fill="#fff"/><rect x="3" y="10" width="11" height="1" fill="#808080"/><rect x="14" y="10" width="1" height="1" fill="#fff"/><rect x="1" y="11" width="1" height="1" fill="#fff"/><rect x="2" y="11" width="1" height="1" fill="#808080"/><rect x="3" y="11" width="2" height="1" fill="#fff"/><rect x="5" y="11" width="8" height="1" fill="#808080"/><rect x="13" y="11" width="1" height="1" fill="#fff"/><rect x="0" y="12" width="1" height="1" fill="#808080"/><rect x="1" y="12" width="3" height="1" fill="#fff"/><rect x="4" y="12" width="8" height="1" fill="#808080"/><rect x="12" y="12" width="1" height="1" fill="#fff"/><rect x="1" y="13" width="1" height="1" fill="#808080"/><rect x="3" y="13" width="1" height="1" fill="#808080"/><rect x="5" y="13" width="1" height="1" fill="#808080"/><rect x="7" y="13" width="1" height="1" fill="#808080"/><rect x="9" y="13" width="1" height="1" fill="#808080"/><rect x="11" y="13" width="1" height="1" fill="#808080"/><rect x="12" y="13" width="1" height="1" fill="#fff"/><rect x="2" y="14" width="1" height="1" fill="#fff"/><rect x="4" y="14" width="1" height="1" fill="#fff"/><rect x="6" y="14" width="1" height="1" fill="#fff"/><rect x="8" y="14" width="1" height="1" fill="#fff"/><rect x="10" y="14" width="1" height="1" fill="#fff"/><rect x="12" y="14" width="1" height="1" fill="#fff"/></svg>
<svg class="a" style="left:672px;top:59px;" width="11" height="14" viewBox="0 0 11 14" shape-rendering="crispEdges"><rect x="5" y="0" width="1" height="1" fill="#008000"/><rect x="4" y="1" width="3" height="1" fill="#008000"/><rect x="3" y="2" width="5" height="1" fill="#008000"/><rect x="2" y="3" width="3" height="1" fill="#008000"/><rect x="5" y="3" width="1" height="1" fill="#40d040"/><rect x="6" y="3" width="3" height="1" fill="#008000"/><rect x="4" y="4" width="2" height="1" fill="#008000"/><rect x="6" y="4" width="1" height="1" fill="#40d040"/><rect x="7" y="4" width="1" height="1" fill="#008000"/><rect x="2" y="5" width="4" height="1" fill="#008000"/><rect x="6" y="5" width="1" height="1" fill="#40d040"/><rect x="7" y="5" width="3" height="1" fill="#008000"/><rect x="1" y="6" width="5" height="1" fill="#008000"/><rect x="6" y="6" width="1" height="1" fill="#40d040"/><rect x="7" y="6" width="4" height="1" fill="#008000"/><rect x="3" y="7" width="3" height="1" fill="#008000"/><rect x="6" y="7" width="1" height="1" fill="#40d040"/><rect x="7" y="7" width="3" height="1" fill="#008000"/><rect x="1" y="8" width="6" height="1" fill="#008000"/><rect x="7" y="8" width="1" height="1" fill="#40d040"/><rect x="8" y="8" width="3" height="1" fill="#008000"/><rect x="0" y="9" width="7" height="1" fill="#008000"/><rect x="7" y="9" width="1" height="1" fill="#40d040"/><rect x="8" y="9" width="3" height="1" fill="#008000"/><rect x="1" y="10" width="2" height="1" fill="#008000"/><rect x="4" y="10" width="1" height="1" fill="#008000"/><rect x="5" y="10" width="1" height="1" fill="#808040"/><rect x="6" y="10" width="1" height="1" fill="#000"/><rect x="7" y="10" width="2" height="1" fill="#008000"/><rect x="5" y="11" width="1" height="1" fill="#808040"/><rect x="6" y="11" width="1" height="1" fill="#000"/><rect x="5" y="12" width="1" height="1" fill="#808040"/><rect x="6" y="12" width="1" height="1" fill="#000"/><rect x="5" y="13" width="1" height="1" fill="#808040"/><rect x="6" y="13" width="1" height="1" fill="#000"/></svg>
<svg class="a" style="left:692px;top:58px;" width="16" height="16" viewBox="0 0 16 16" shape-rendering="crispEdges"><rect x="12" y="0" width="1" height="1" fill="#808080"/><rect x="11" y="1" width="3" height="1" fill="#808080"/><rect x="10" y="2" width="5" height="1" fill="#808080"/><rect x="9" y="3" width="6" height="1" fill="#808080"/><rect x="15" y="3" width="1" height="1" fill="#fff"/><rect x="8" y="4" width="6" height="1" fill="#808080"/><rect x="14" y="4" width="1" height="1" fill="#fff"/><rect x="7" y="5" width="6" height="1" fill="#808080"/><rect x="13" y="5" width="1" height="1" fill="#fff"/><rect x="6" y="6" width="6" height="1" fill="#808080"/><rect x="12" y="6" width="1" height="1" fill="#fff"/><rect x="5" y="7" width="6" height="1" fill="#808080"/><rect x="11" y="7" width="1" height="1" fill="#fff"/><rect x="4" y="8" width="6" height="1" fill="#808080"/><rect x="10" y="8" width="1" height="1" fill="#fff"/><rect x="3" y="9" width="6" height="1" fill="#808080"/><rect x="9" y="9" width="1" height="1" fill="#fff"/><rect x="2" y="10" width="6" height="1" fill="#808080"/><rect x="8" y="10" width="1" height="1" fill="#fff"/><rect x="1" y="11" width="2" height="1" fill="#808080"/><rect x="3" y="11" width="2" height="1" fill="#fff"/><rect x="5" y="11" width="2" height="1" fill="#808080"/><rect x="7" y="11" width="1" height="1" fill="#fff"/><rect x="0" y="12" width="2" height="1" fill="#808080"/><rect x="2" y="12" width="2" height="1" fill="#fff"/><rect x="4" y="12" width="2" height="1" fill="#808080"/><rect x="6" y="12" width="1" height="1" fill="#fff"/><rect x="1" y="13" width="4" height="1" fill="#808080"/><rect x="5" y="13" width="1" height="1" fill="#fff"/><rect x="2" y="14" width="2" height="1" fill="#808080"/><rect x="4" y="14" width="1" height="1" fill="#fff"/><rect x="3" y="15" width="1" height="1" fill="#fff"/></svg>
<div class="a" style="left:5px;top:84px;width:3px;height:25px;border:1px solid;border-color:#fff #808080 #808080 #fff"></div>
<div class="a" style="left:9px;top:84px;width:3px;height:25px;border:1px solid;border-color:#fff #808080 #808080 #fff"></div>
<svg class="a" style="left:16px;top:88px;" width="16" height="16" viewBox="0 0 16 16" shape-rendering="crispEdges"><rect x="7" y="0" width="2" height="1" fill="#808080"/><rect x="6" y="1" width="4" height="1" fill="#808080"/><rect x="4" y="2" width="2" height="1" fill="#808080"/><rect x="6" y="2" width="1" height="1" fill="#cccccc"/><rect x="7" y="2" width="2" height="1" fill="#808080"/><rect x="9" y="2" width="1" height="1" fill="#cccccc"/><rect x="10" y="2" width="2" height="1" fill="#808080"/><rect x="2" y="3" width="2" height="1" fill="#808080"/><rect x="4" y="3" width="1" height="1" fill="#cccccc"/><rect x="5" y="3" width="6" height="1" fill="#808080"/><rect x="11" y="3" width="1" height="1" fill="#cccccc"/><rect x="12" y="3" width="2" height="1" fill="#808080"/><rect x="0" y="4" width="2" height="1" fill="#808080"/><rect x="2" y="4" width="4" height="1" fill="#cccccc"/><rect x="6" y="4" width="4" height="1" fill="#808080"/><rect x="10" y="4" width="4" height="1" fill="#cccccc"/><rect x="14" y="4" width="2" height="1" fill="#808080"/><rect x="0" y="5" width="2" height="1" fill="#fff"/><rect x="2" y="5" width="2" height="1" fill="#808080"/><rect x="4" y="5" width="3" height="1" fill="#cccccc"/><rect x="7" y="5" width="2" height="1" fill="#808080"/><rect x="9" y="5" width="3" height="1" fill="#cccccc"/><rect x="12" y="5" width="2" height="1" fill="#808080"/><rect x="14" y="5" width="2" height="1" fill="#fff"/><rect x="2" y="6" width="2" height="1" fill="#fff"/><rect x="4" y="6" width="2" height="1" fill="#808080"/><rect x="6" y="6" width="4" height="1" fill="#cccccc"/><rect x="10" y="6" width="2" height="1" fill="#808080"/><rect x="12" y="6" width="2" height="1" fill="#fff"/><rect x="0" y="7" width="2" height="1" fill="#808080"/><rect x="2" y="7" width="2" height="1" fill="#cccccc"/><rect x="4" y="7" width="2" height="1" fill="#fff"/><rect x="6" y="7" width="4" height="1" fill="#808080"/><rect x="10" y="7" width="2" height="1" fill="#fff"/><rect x="12" y="7" width="2" height="1" fill="#cccccc"/><rect x="14" y="7" width="2" height="1" fill="#808080"/><rect x="0" y="8" width="2" height="1" fill="#fff"/><rect x="2" y="8" width="2" height="1" fill="#808080"/><rect x="4" y="8" width="2" height="1" fill="#cccccc"/><rect x="6" y="8" width="4" height="1" fill="#fff"/><rect x="10" y="8" width="2" height="1" fill="#cccccc"/><rect x="12" y="8" width="2" height="1" fill="#808080"/><rect x="14" y="8" width="2" height="1" fill="#fff"/><rect x="2" y="9" width="2" height="1" fill="#fff"/><rect x="4" y="9" width="2" height="1" fill="#808080"/><rect x="6" y="9" width="4" height="1" fill="#cccccc"/><rect x="10" y="9" width="2" height="1" fill="#808080"/><rect x="12" y="9" width="2" height="1" fill="#fff"/><rect x="0" y="10" width="2" height="1" fill="#808080"/><rect x="2" y="10" width="2" height="1" fill="#cccccc"/><rect x="4" y="10" width="2" height="1" fill="#fff"/><rect x="6" y="10" width="4" height="1" fill="#808080"/><rect x="10" y="10" width="2" height="1" fill="#fff"/><rect x="12" y="10" width="2" height="1" fill="#cccccc"/><rect x="14" y="10" width="2" height="1" fill="#808080"/><rect x="0" y="11" width="2" height="1" fill="#fff"/><rect x="2" y="11" width="2" height="1" fill="#808080"/><rect x="4" y="11" width="2" height="1" fill="#cccccc"/><rect x="6" y="11" width="4" height="1" fill="#fff"/><rect x="10" y="11" width="2" height="1" fill="#cccccc"/><rect x="12" y="11" width="2" height="1" fill="#808080"/><rect x="14" y="11" width="2" height="1" fill="#fff"/><rect x="2" y="12" width="2" height="1" fill="#fff"/><rect x="4" y="12" width="2" height="1" fill="#808080"/><rect x="6" y="12" width="4" height="1" fill="#cccccc"/><rect x="10" y="12" width="2" height="1" fill="#808080"/><rect x="12" y="12" width="2" height="1" fill="#fff"/><rect x="4" y="13" width="2" height="1" fill="#fff"/><rect x="6" y="13" width="4" height="1" fill="#808080"/><rect x="10" y="13" width="2" height="1" fill="#fff"/><rect x="6" y="14" width="4" height="1" fill="#fff"/></svg>
<svg class="a" style="left:39px;top:89px;" width="15" height="14" viewBox="0 0 15 14" shape-rendering="crispEdges"><rect x="1" y="0" width="1" height="1" fill="#000080"/><rect x="5" y="0" width="1" height="1" fill="#000080"/><rect x="9" y="0" width="1" height="1" fill="#000080"/><rect x="13" y="0" width="1" height="1" fill="#000080"/><rect x="3" y="1" width="1" height="1" fill="#000080"/><rect x="7" y="1" width="1" height="1" fill="#000080"/><rect x="11" y="1" width="1" height="1" fill="#000080"/><rect x="1" y="2" width="1" height="1" fill="#000080"/><rect x="4" y="2" width="2" height="1" fill="#000080"/><rect x="7" y="2" width="1" height="1" fill="#000080"/><rect x="9" y="2" width="2" height="1" fill="#000080"/><rect x="13" y="2" width="1" height="1" fill="#000080"/><rect x="0" y="3" width="1" height="1" fill="#000"/><rect x="4" y="3" width="2" height="1" fill="#000080"/><rect x="9" y="3" width="2" height="1" fill="#000080"/><rect x="14" y="3" width="1" height="1" fill="#000"/><rect x="0" y="4" width="1" height="1" fill="#000"/><rect x="3" y="4" width="4" height="1" fill="#000080"/><rect x="8" y="4" width="4" height="1" fill="#000080"/><rect x="14" y="4" width="1" height="1" fill="#000"/><rect x="0" y="5" width="1" height="1" fill="#000"/><rect x="4" y="5" width="2" height="1" fill="#000080"/><rect x="9" y="5" width="2" height="1" fill="#000080"/><rect x="14" y="5" width="1" height="1" fill="#000"/><rect x="0" y="6" width="1" height="1" fill="#000"/><rect x="1" y="6" width="13" height="1" fill="#fff"/><rect x="14" y="6" width="1" height="1" fill="#000"/><rect x="0" y="7" width="1" height="1" fill="#000"/><rect x="1" y="7" width="13" height="1" fill="#fff"/><rect x="14" y="7" width="1" height="1" fill="#000"/><rect x="0" y="8" width="1" height="1" fill="#000"/><rect x="1" y="8" width="1" height="1" fill="#fff"/><rect x="2" y="8" width="1" height="1" fill="#000"/><rect x="3" y="8" width="1" height="1" fill="#fff"/><rect x="4" y="8" width="1" height="1" fill="#000"/><rect x="5" y="8" width="1" height="1" fill="#fff"/><rect x="6" y="8" width="1" height="1" fill="#000"/><rect x="7" y="8" width="1" height="1" fill="#fff"/><rect x="8" y="8" width="1" height="1" fill="#000"/><rect x="9" y="8" width="1" height="1" fill="#fff"/><rect x="10" y="8" width="1" height="1" fill="#000"/><rect x="11" y="8" width="1" height="1" fill="#fff"/><rect x="12" y="8" width="1" height="1" fill="#000"/><rect x="13" y="8" width="1" height="1" fill="#fff"/><rect x="14" y="8" width="1" height="1" fill="#000"/><rect x="0" y="9" width="1" height="1" fill="#000"/><rect x="1" y="9" width="13" height="1" fill="#fff"/><rect x="14" y="9" width="1" height="1" fill="#000"/><rect x="0" y="10" width="1" height="1" fill="#000"/><rect x="1" y="10" width="1" height="1" fill="#fff"/><rect x="2" y="10" width="1" height="1" fill="#000"/><rect x="3" y="10" width="1" height="1" fill="#fff"/><rect x="4" y="10" width="1" height="1" fill="#000"/><rect x="5" y="10" width="1" height="1" fill="#fff"/><rect x="6" y="10" width="1" height="1" fill="#000"/><rect x="7" y="10" width="1" height="1" fill="#fff"/><rect x="8" y="10" width="1" height="1" fill="#000"/><rect x="9" y="10" width="1" height="1" fill="#fff"/><rect x="10" y="10" width="1" height="1" fill="#000"/><rect x="11" y="10" width="1" height="1" fill="#fff"/><rect x="12" y="10" width="1" height="1" fill="#000"/><rect x="13" y="10" width="1" height="1" fill="#fff"/><rect x="14" y="10" width="1" height="1" fill="#000"/><rect x="0" y="11" width="1" height="1" fill="#000"/><rect x="1" y="11" width="13" height="1" fill="#fff"/><rect x="14" y="11" width="1" height="1" fill="#000"/><rect x="0" y="12" width="1" height="1" fill="#000"/><rect x="1" y="12" width="13" height="1" fill="#fff"/><rect x="14" y="12" width="1" height="1" fill="#000"/><rect x="0" y="13" width="15" height="1" fill="#000"/></svg>
<svg class="a" style="left:61px;top:89px;" width="16" height="15" viewBox="0 0 16 15" shape-rendering="crispEdges"><rect x="2" y="0" width="3" height="1" fill="#808080"/><rect x="11" y="0" width="3" height="1" fill="#808080"/><rect x="3" y="1" width="3" height="1" fill="#808080"/><rect x="10" y="1" width="3" height="1" fill="#808080"/><rect x="13" y="1" width="1" height="1" fill="#fff"/><rect x="4" y="2" width="3" height="1" fill="#808080"/><rect x="9" y="2" width="3" height="1" fill="#808080"/><rect x="12" y="2" width="1" height="1" fill="#fff"/><rect x="5" y="3" width="6" height="1" fill="#808080"/><rect x="11" y="3" width="1" height="1" fill="#fff"/><rect x="6" y="4" width="4" height="1" fill="#808080"/><rect x="10" y="4" width="1" height="1" fill="#fff"/><rect x="5" y="5" width="6" height="1" fill="#808080"/><rect x="11" y="5" width="1" height="1" fill="#fff"/><rect x="4" y="6" width="3" height="1" fill="#808080"/><rect x="7" y="6" width="2" height="1" fill="#fff"/><rect x="9" y="6" width="3" height="1" fill="#808080"/><rect x="12" y="6" width="1" height="1" fill="#fff"/><rect x="2" y="7" width="13" height="1" fill="#808080"/><rect x="2" y="8" width="1" height="1" fill="#808080"/><rect x="3" y="8" width="11" height="1" fill="#cccccc"/><rect x="14" y="8" width="1" height="1" fill="#808080"/><rect x="15" y="8" width="1" height="1" fill="#fff"/><rect x="2" y="9" width="1" height="1" fill="#808080"/><rect x="3" y="9" width="1" height="1" fill="#cccccc"/><rect x="4" y="9" width="1" height="1" fill="#808080"/><rect x="5" y="9" width="1" height="1" fill="#cccccc"/><rect x="6" y="9" width="1" height="1" fill="#808080"/><rect x="7" y="9" width="1" height="1" fill="#cccccc"/><rect x="8" y="9" width="1" height="1" fill="#808080"/><rect x="9" y="9" width="1" height="1" fill="#cccccc"/><rect x="10" y="9" width="1" height="1" fill="#808080"/><rect x="11" y="9" width="1" height="1" fill="#cccccc"/><rect x="12" y="9" width="1" height="1" fill="#808080"/><rect x="13" y="9" width="1" height="1" fill="#cccccc"/><rect x="14" y="9" width="1" height="1" fill="#808080"/><rect x="15" y="9" width="1" height="1" fill="#fff"/><rect x="2" y="10" width="1" height="1" fill="#808080"/><rect x="3" y="10" width="11" height="1" fill="#cccccc"/><rect x="14" y="10" width="1" height="1" fill="#808080"/><rect x="15" y="10" width="1" height="1" fill="#fff"/><rect x="2" y="11" width="1" height="1" fill="#808080"/><rect x="3" y="11" width="1" height="1" fill="#cccccc"/><rect x="4" y="11" width="1" height="1" fill="#808080"/><rect x="5" y="11" width="1" height="1" fill="#cccccc"/><rect x="6" y="11" width="1" height="1" fill="#808080"/><rect x="7" y="11" width="1" height="1" fill="#cccccc"/><rect x="8" y="11" width="1" height="1" fill="#808080"/><rect x="9" y="11" width="1" height="1" fill="#cccccc"/><rect x="10" y="11" width="1" height="1" fill="#808080"/><rect x="11" y="11" width="1" height="1" fill="#cccccc"/><rect x="12" y="11" width="1" height="1" fill="#808080"/><rect x="13" y="11" width="1" height="1" fill="#cccccc"/><rect x="14" y="11" width="1" height="1" fill="#808080"/><rect x="15" y="11" width="1" height="1" fill="#fff"/><rect x="2" y="12" width="1" height="1" fill="#808080"/><rect x="3" y="12" width="11" height="1" fill="#cccccc"/><rect x="14" y="12" width="1" height="1" fill="#808080"/><rect x="15" y="12" width="1" height="1" fill="#fff"/><rect x="2" y="13" width="13" height="1" fill="#808080"/><rect x="15" y="13" width="1" height="1" fill="#fff"/><rect x="3" y="14" width="13" height="1" fill="#fff"/></svg>
<svg class="a" style="left:89px;top:89px;" width="5" height="15" viewBox="0 0 5 15" shape-rendering="crispEdges"><rect x="1" y="0" width="3" height="1" fill="#800000"/><rect x="0" y="1" width="5" height="1" fill="#800000"/><rect x="0" y="2" width="5" height="1" fill="#800000"/><rect x="0" y="3" width="5" height="1" fill="#800000"/><rect x="1" y="4" width="3" height="1" fill="#800000"/><rect x="1" y="5" width="3" height="1" fill="#800000"/><rect x="1" y="6" width="3" height="1" fill="#800000"/><rect x="1" y="7" width="3" height="1" fill="#800000"/><rect x="2" y="8" width="1" height="1" fill="#800000"/><rect x="2" y="9" width="1" height="1" fill="#800000"/><rect x="1" y="12" width="3" height="1" fill="#800000"/><rect x="0" y="13" width="5" height="1" fill="#800000"/><rect x="1" y="14" width="3" height="1" fill="#800000"/></svg>
<svg class="a" style="left:107px;top:88px;" width="17" height="14" viewBox="0 0 17 14" shape-rendering="crispEdges"><rect x="0" y="0" width="11" height="1" fill="#808080"/><rect x="0" y="1" width="1" height="1" fill="#808080"/><rect x="1" y="1" width="9" height="1" fill="#fff"/><rect x="10" y="1" width="1" height="1" fill="#808080"/><rect x="0" y="2" width="1" height="1" fill="#808080"/><rect x="1" y="2" width="1" height="1" fill="#fff"/><rect x="2" y="2" width="2" height="1" fill="#000"/><rect x="4" y="2" width="6" height="1" fill="#fff"/><rect x="10" y="2" width="1" height="1" fill="#808080"/><rect x="14" y="2" width="1" height="1" fill="#000080"/><rect x="0" y="3" width="1" height="1" fill="#808080"/><rect x="1" y="3" width="9" height="1" fill="#fff"/><rect x="10" y="3" width="1" height="1" fill="#808080"/><rect x="14" y="3" width="1" height="1" fill="#000080"/><rect x="0" y="4" width="1" height="1" fill="#808080"/><rect x="1" y="4" width="2" height="1" fill="#fff"/><rect x="3" y="4" width="6" height="1" fill="#000"/><rect x="9" y="4" width="1" height="1" fill="#fff"/><rect x="10" y="4" width="1" height="1" fill="#808080"/><rect x="14" y="4" width="1" height="1" fill="#000080"/><rect x="0" y="5" width="1" height="1" fill="#808080"/><rect x="1" y="5" width="9" height="1" fill="#fff"/><rect x="10" y="5" width="1" height="1" fill="#808080"/><rect x="14" y="5" width="1" height="1" fill="#000080"/><rect x="0" y="6" width="1" height="1" fill="#808080"/><rect x="1" y="6" width="2" height="1" fill="#fff"/><rect x="3" y="6" width="5" height="1" fill="#000"/><rect x="8" y="6" width="2" height="1" fill="#fff"/><rect x="10" y="6" width="1" height="1" fill="#808080"/><rect x="14" y="6" width="1" height="1" fill="#000080"/><rect x="0" y="7" width="1" height="1" fill="#808080"/><rect x="1" y="7" width="9" height="1" fill="#fff"/><rect x="10" y="7" width="1" height="1" fill="#808080"/><rect x="14" y="7" width="1" height="1" fill="#000080"/><rect x="0" y="8" width="1" height="1" fill="#808080"/><rect x="1" y="8" width="2" height="1" fill="#fff"/><rect x="3" y="8" width="6" height="1" fill="#000"/><rect x="9" y="8" width="1" height="1" fill="#fff"/><rect x="10" y="8" width="1" height="1" fill="#808080"/><rect x="14" y="8" width="1" height="1" fill="#000080"/><rect x="0" y="9" width="1" height="1" fill="#808080"/><rect x="1" y="9" width="9" height="1" fill="#fff"/><rect x="10" y="9" width="1" height="1" fill="#808080"/><rect x="14" y="9" width="1" height="1" fill="#000080"/><rect x="0" y="10" width="1" height="1" fill="#808080"/><rect x="1" y="10" width="2" height="1" fill="#fff"/><rect x="3" y="10" width="6" height="1" fill="#000"/><rect x="9" y="10" width="1" height="1" fill="#fff"/><rect x="10" y="10" width="1" height="1" fill="#808080"/><rect x="12" y="10" width="5" height="1" fill="#000080"/><rect x="0" y="11" width="1" height="1" fill="#808080"/><rect x="1" y="11" width="9" height="1" fill="#fff"/><rect x="10" y="11" width="1" height="1" fill="#808080"/><rect x="13" y="11" width="3" height="1" fill="#000080"/><rect x="0" y="12" width="1" height="1" fill="#808080"/><rect x="1" y="12" width="9" height="1" fill="#fff"/><rect x="10" y="12" width="1" height="1" fill="#808080"/><rect x="14" y="12" width="1" height="1" fill="#000080"/><rect x="0" y="13" width="11" height="1" fill="#808080"/></svg>
<svg class="a" style="left:131px;top:88px;" width="14" height="15" viewBox="0 0 14 15" shape-rendering="crispEdges"><rect x="7" y="0" width="2" height="1" fill="#808080"/><rect x="5" y="1" width="2" height="1" fill="#808080"/><rect x="7" y="1" width="2" height="1" fill="#fff"/><rect x="9" y="1" width="2" height="1" fill="#808080"/><rect x="4" y="2" width="1" height="1" fill="#808080"/><rect x="5" y="2" width="1" height="1" fill="#fff"/><rect x="6" y="2" width="1" height="1" fill="#808080"/><rect x="7" y="2" width="1" height="1" fill="#fff"/><rect x="8" y="2" width="1" height="1" fill="#808080"/><rect x="9" y="2" width="1" height="1" fill="#fff"/><rect x="10" y="2" width="2" height="1" fill="#808080"/><rect x="4" y="3" width="1" height="1" fill="#808080"/><rect x="5" y="3" width="1" height="1" fill="#fff"/><rect x="6" y="3" width="1" height="1" fill="#808080"/><rect x="7" y="3" width="1" height="1" fill="#fff"/><rect x="8" y="3" width="1" height="1" fill="#808080"/><rect x="9" y="3" width="1" height="1" fill="#fff"/><rect x="10" y="3" width="1" height="1" fill="#808080"/><rect x="11" y="3" width="1" height="1" fill="#fff"/><rect x="12" y="3" width="1" height="1" fill="#808080"/><rect x="4" y="4" width="1" height="1" fill="#808080"/><rect x="5" y="4" width="1" height="1" fill="#fff"/><rect x="6" y="4" width="1" height="1" fill="#808080"/><rect x="7" y="4" width="1" height="1" fill="#fff"/><rect x="8" y="4" width="1" height="1" fill="#808080"/><rect x="9" y="4" width="1" height="1" fill="#fff"/><rect x="10" y="4" width="1" height="1" fill="#808080"/><rect x="11" y="4" width="1" height="1" fill="#fff"/><rect x="12" y="4" width="1" height="1" fill="#808080"/><rect x="4" y="5" width="1" height="1" fill="#808080"/><rect x="5" y="5" width="1" height="1" fill="#fff"/><rect x="6" y="5" width="1" height="1" fill="#808080"/><rect x="7" y="5" width="1" height="1" fill="#fff"/><rect x="8" y="5" width="1" height="1" fill="#808080"/><rect x="9" y="5" width="1" height="1" fill="#fff"/><rect x="10" y="5" width="1" height="1" fill="#808080"/><rect x="11" y="5" width="1" height="1" fill="#fff"/><rect x="12" y="5" width="1" height="1" fill="#808080"/><rect x="1" y="6" width="2" height="1" fill="#808080"/><rect x="4" y="6" width="1" height="1" fill="#808080"/><rect x="5" y="6" width="7" height="1" fill="#fff"/><rect x="12" y="6" width="1" height="1" fill="#808080"/><rect x="0" y="7" width="1" height="1" fill="#808080"/><rect x="1" y="7" width="2" height="1" fill="#fff"/><rect x="3" y="7" width="2" height="1" fill="#808080"/><rect x="5" y="7" width="7" height="1" fill="#fff"/><rect x="12" y="7" width="1" height="1" fill="#808080"/><rect x="0" y="8" width="1" height="1" fill="#808080"/><rect x="1" y="8" width="3" height="1" fill="#fff"/><rect x="4" y="8" width="1" height="1" fill="#808080"/><rect x="5" y="8" width="7" height="1" fill="#fff"/><rect x="12" y="8" width="1" height="1" fill="#808080"/><rect x="13" y="8" width="1" height="1" fill="#fff"/><rect x="1" y="9" width="1" height="1" fill="#808080"/><rect x="2" y="9" width="10" height="1" fill="#fff"/><rect x="12" y="9" width="1" height="1" fill="#808080"/><rect x="13" y="9" width="1" height="1" fill="#fff"/><rect x="2" y="10" width="1" height="1" fill="#808080"/><rect x="3" y="10" width="8" height="1" fill="#fff"/><rect x="11" y="10" width="1" height="1" fill="#808080"/><rect x="12" y="10" width="1" height="1" fill="#fff"/><rect x="3" y="11" width="1" height="1" fill="#808080"/><rect x="4" y="11" width="6" height="1" fill="#fff"/><rect x="10" y="11" width="1" height="1" fill="#808080"/><rect x="11" y="11" width="1" height="1" fill="#fff"/><rect x="4" y="12" width="1" height="1" fill="#808080"/><rect x="5" y="12" width="5" height="1" fill="#fff"/><rect x="10" y="12" width="1" height="1" fill="#808080"/><rect x="11" y="12" width="1" height="1" fill="#fff"/><rect x="5" y="13" width="6" height="1" fill="#808080"/><rect x="11" y="13" width="1" height="1" fill="#fff"/><rect x="6" y="14" width="6" height="1" fill="#fff"/></svg>
<div class="a" style="left:10px;top:118px;width:261px;height:3px;border:1px solid;border-color:#fff #808080 #808080 #fff"></div>
<div class="a" style="left:10px;top:122px;width:261px;height:3px;border:1px solid;border-color:#fff #808080 #808080 #fff"></div>
<div class="a" style="left:273px;top:115px;width:12px;height:12px;background:#cccccc;box-shadow:inset -1px -1px 0 #000,inset 1px 1px 0 #fff,inset -2px -2px 0 #808080"></div>
<svg class="a" style="left:276px;top:119px;" width="7" height="4" viewBox="0 0 7 4" shape-rendering="crispEdges"><rect x="3" y="0" width="1" height="1" fill="#808080"/><rect x="2" y="1" width="3" height="1" fill="#808080"/><rect x="1" y="2" width="5" height="1" fill="#808080"/><rect x="0" y="3" width="7" height="1" fill="#808080"/></svg>
<div class="a" style="left:287px;top:115px;width:12px;height:12px;background:#cccccc;box-shadow:inset -1px -1px 0 #000,inset 1px 1px 0 #fff,inset -2px -2px 0 #808080"></div>
<svg class="a" style="left:290px;top:118px;" width="6" height="5" viewBox="0 0 6 5" shape-rendering="crispEdges"><rect x="0" y="0" width="2" height="1" fill="#404040"/><rect x="4" y="0" width="2" height="1" fill="#404040"/><rect x="1" y="1" width="4" height="1" fill="#404040"/><rect x="2" y="2" width="2" height="1" fill="#404040"/><rect x="1" y="3" width="4" height="1" fill="#404040"/><rect x="0" y="4" width="2" height="1" fill="#404040"/><rect x="4" y="4" width="2" height="1" fill="#404040"/></svg>
<div class="a" style="left:305px;top:112px;width:1px;height:387px;background:#fff"></div>
<div class="a" style="left:10px;top:130px;width:288px;height:343px;border:1px solid;border-color:#fff #000 #000 #fff"></div>
<div class="a" style="left:11px;top:131px;width:286px;height:341px;border:1px solid;border-color:#808080"></div>
<div class="a" style="left:12px;top:132px;width:284px;height:339px;border:1px solid;border-color:#000 #fff #fff #000"></div>
<div class="a" style="left:13px;top:133px;width:282px;height:337px;border:1px solid;border-color:#404040 #cccccc #cccccc #404040;background:#fff"></div>
<div class="a" style="left:26px;top:151px;width:1px;height:1px;background:#808080"></div>
<div class="a" style="left:26px;top:153px;width:1px;height:1px;background:#808080"></div>
<div class="a" style="left:32px;top:159px;width:1px;height:1px;background:#808080"></div>
<div class="a" style="left:34px;top:159px;width:1px;height:1px;background:#808080"></div>
<div class="a" style="left:36px;top:159px;width:1px;height:1px;background:#808080"></div>
<div class="a" style="left:38px;top:159px;width:1px;height:1px;background:#808080"></div>
<div class="a" style="left:45px;top:165px;width:1px;height:1px;background:#808080"></div>
<div class="a" style="left:45px;top:167px;width:1px;height:1px;background:#808080"></div>
<div class="a" style="left:45px;top:169px;width:1px;height:1px;background:#808080"></div>
<div class="a" style="left:45px;top:181px;width:1px;height:1px;background:#808080"></div>
<div class="a" style="left:45px;top:183px;width:1px;height:1px;background:#808080"></div>
<div class="a" style="left:45px;top:185px;width:1px;height:1px;background:#808080"></div>
<div class="a" style="left:45px;top:187px;width:1px;height:1px;background:#808080"></div>
<div class="a" style="left:45px;top:189px;width:1px;height:1px;background:#808080"></div>
<div class="a" style="left:45px;top:191px;width:1px;height:1px;background:#808080"></div>
<div class="a" style="left:45px;top:193px;width:1px;height:1px;background:#808080"></div>
<div class="a" style="left:45px;top:195px;width:1px;height:1px;background:#808080"></div>
<div class="a" style="left:45px;top:197px;width:1px;height:1px;background:#808080"></div>
<div class="a" style="left:45px;top:199px;width:1px;height:1px;background:#808080"></div>
<div class="a" style="left:45px;top:201px;width:1px;height:1px;background:#808080"></div>
<div class="a" style="left:45px;top:203px;width:1px;height:1px;background:#808080"></div>
<div class="a" style="left:45px;top:205px;width:1px;height:1px;background:#808080"></div>
<div class="a" style="left:45px;top:207px;width:1px;height:1px;background:#808080"></div>
<div class="a" style="left:45px;top:209px;width:1px;height:1px;background:#808080"></div>
<div class="a" style="left:45px;top:211px;width:1px;height:1px;background:#808080"></div>
<div class="a" style="left:45px;top:213px;width:1px;height:1px;background:#808080"></div>
<div class="a" style="left:45px;top:215px;width:1px;height:1px;background:#808080"></div>
<div class="a" style="left:45px;top:217px;width:1px;height:1px;background:#808080"></div>
<div class="a" style="left:45px;top:219px;width:1px;height:1px;background:#808080"></div>
<div class="a" style="left:45px;top:221px;width:1px;height:1px;background:#808080"></div>
<div class="a" style="left:45px;top:223px;width:1px;height:1px;background:#808080"></div>
<div class="a" style="left:45px;top:225px;width:1px;height:1px;background:#808080"></div>
<div class="a" style="left:45px;top:227px;width:1px;height:1px;background:#808080"></div>
<div class="a" style="left:45px;top:229px;width:1px;height:1px;background:#808080"></div>
<div class="a" style="left:45px;top:231px;width:1px;height:1px;background:#808080"></div>
<div class="a" style="left:45px;top:233px;width:1px;height:1px;background:#808080"></div>
<div class="a" style="left:45px;top:235px;width:1px;height:1px;background:#808080"></div>
<div class="a" style="left:45px;top:237px;width:1px;height:1px;background:#808080"></div>
<div class="a" style="left:45px;top:239px;width:1px;height:1px;background:#808080"></div>
<div class="a" style="left:51px;top:175px;width:1px;height:1px;background:#808080"></div>
<div class="a" style="left:53px;top:175px;width:1px;height:1px;background:#808080"></div>
<div class="a" style="left:55px;top:175px;width:1px;height:1px;background:#808080"></div>
<div class="a" style="left:57px;top:175px;width:1px;height:1px;background:#808080"></div>
<div class="a" style="left:51px;top:207px;width:1px;height:1px;background:#808080"></div>
<div class="a" style="left:53px;top:207px;width:1px;height:1px;background:#808080"></div>
<div class="a" style="left:55px;top:207px;width:1px;height:1px;background:#808080"></div>
<div class="a" style="left:57px;top:207px;width:1px;height:1px;background:#808080"></div>
<div class="a" style="left:51px;top:223px;width:1px;height:1px;background:#808080"></div>
<div class="a" style="left:53px;top:223px;width:1px;height:1px;background:#808080"></div>
<div class="a" style="left:55px;top:223px;width:1px;height:1px;background:#808080"></div>
<div class="a" style="left:57px;top:223px;width:1px;height:1px;background:#808080"></div>
<div class="a" style="left:51px;top:239px;width:1px;height:1px;background:#808080"></div>
<div class="a" style="left:53px;top:239px;width:1px;height:1px;background:#808080"></div>
<div class="a" style="left:55px;top:239px;width:1px;height:1px;background:#808080"></div>
<div class="a" style="left:57px;top:239px;width:1px;height:1px;background:#808080"></div>
<div class="a" style="left:64px;top:183px;width:1px;height:1px;background:#808080"></div>
<div class="a" style="left:64px;top:185px;width:1px;height:1px;background:#808080"></div>
<div class="a" style="left:64px;top:187px;width:1px;height:1px;background:#808080"></div>
<div class="a" style="left:64px;top:189px;width:1px;height:1px;background:#808080"></div>
<div class="a" style="left:64px;top:191px;width:1px;height:1px;background:#808080"></div>
<div class="a" style="left:66px;top:191px;width:1px;height:1px;background:#808080"></div>
<div class="a" style="left:68px;top:191px;width:1px;height:1px;background:#808080"></div>
<div class="a" style="left:70px;top:191px;width:1px;height:1px;background:#808080"></div>
<div class="a" style="left:72px;top:191px;width:1px;height:1px;background:#808080"></div>
<div class="a" style="left:74px;top:191px;width:1px;height:1px;background:#808080"></div>
<div class="a" style="left:76px;top:191px;width:1px;height:1px;background:#808080"></div>
<div class="a" style="left:78px;top:191px;width:1px;height:1px;background:#808080"></div>
<div class="a" style="left:22px;top:155px;width:9px;height:9px;border:1px solid #808080;background:#fff"></div>
<div class="a" style="left:24px;top:159px;width:5px;height:1px;background:#000"></div>
<div class="a" style="left:41px;top:171px;width:9px;height:9px;border:1px solid #808080;background:#fff"></div>
<div class="a" style="left:43px;top:175px;width:5px;height:1px;background:#000"></div>
<div class="a" style="left:41px;top:235px;width:9px;height:9px;border:1px solid #808080;background:#fff"></div>
<div class="a" style="left:43px;top:239px;width:5px;height:1px;background:#000"></div>
<div class="a" style="left:45px;top:237px;width:1px;height:5px;background:#000"></div>
<svg class="a" style="left:20px;top:134px;" width="16" height="14" viewBox="0 0 16 14" shape-rendering="crispEdges"><rect x="2" y="0" width="14" height="1" fill="#000080"/><rect x="2" y="1" width="14" height="1" fill="#000080"/><rect x="2" y="2" width="1" height="1" fill="#000"/><rect x="3" y="2" width="12" height="1" fill="#fff"/><rect x="15" y="2" width="1" height="1" fill="#000"/><rect x="0" y="3" width="5" height="1" fill="#000"/><rect x="5" y="3" width="2" height="1" fill="#fff"/><rect x="7" y="3" width="1" height="1" fill="#000"/><rect x="8" y="3" width="6" height="1" fill="#fff"/><rect x="14" y="3" width="1" height="1" fill="#000"/><rect x="0" y="4" width="1" height="1" fill="#000"/><rect x="1" y="4" width="3" height="1" fill="#fff"/><rect x="4" y="4" width="4" height="1" fill="#000"/><rect x="8" y="4" width="2" height="1" fill="#fff"/><rect x="10" y="4" width="1" height="1" fill="#000"/><rect x="11" y="4" width="3" height="1" fill="#fff"/><rect x="14" y="4" width="1" height="1" fill="#000"/><rect x="0" y="5" width="1" height="1" fill="#000"/><rect x="1" y="5" width="1" height="1" fill="#fff"/><rect x="2" y="5" width="3" height="1" fill="#000"/><rect x="5" y="5" width="3" height="1" fill="#fff"/><rect x="8" y="5" width="4" height="1" fill="#000"/><rect x="12" y="5" width="1" height="1" fill="#fff"/><rect x="13" y="5" width="1" height="1" fill="#000"/><rect x="0" y="6" width="1" height="1" fill="#000"/><rect x="1" y="6" width="3" height="1" fill="#fff"/><rect x="4" y="6" width="1" height="1" fill="#000"/><rect x="5" y="6" width="1" height="1" fill="#fff"/><rect x="6" y="6" width="3" height="1" fill="#000"/><rect x="9" y="6" width="3" height="1" fill="#fff"/><rect x="12" y="6" width="2" height="1" fill="#000"/><rect x="0" y="7" width="1" height="1" fill="#000"/><rect x="1" y="7" width="1" height="1" fill="#fff"/><rect x="2" y="7" width="3" height="1" fill="#000"/><rect x="5" y="7" width="3" height="1" fill="#fff"/><rect x="8" y="7" width="1" height="1" fill="#000"/><rect x="9" y="7" width="4" height="1" fill="#fff"/><rect x="13" y="7" width="1" height="1" fill="#000"/><rect x="0" y="8" width="1" height="1" fill="#000"/><rect x="1" y="8" width="3" height="1" fill="#fff"/><rect x="4" y="8" width="1" height="1" fill="#000"/><rect x="5" y="8" width="1" height="1" fill="#fff"/><rect x="6" y="8" width="4" height="1" fill="#000"/><rect x="10" y="8" width="2" height="1" fill="#fff"/><rect x="12" y="8" width="2" height="1" fill="#000"/><rect x="0" y="9" width="1" height="1" fill="#000"/><rect x="1" y="9" width="1" height="1" fill="#fff"/><rect x="2" y="9" width="3" height="1" fill="#000"/><rect x="5" y="9" width="3" height="1" fill="#fff"/><rect x="8" y="9" width="1" height="1" fill="#000"/><rect x="9" y="9" width="4" height="1" fill="#fff"/><rect x="13" y="9" width="1" height="1" fill="#000"/><rect x="0" y="10" width="5" height="1" fill="#000"/><rect x="5" y="10" width="1" height="1" fill="#fff"/><rect x="6" y="10" width="5" height="1" fill="#000"/><rect x="11" y="10" width="2" height="1" fill="#fff"/><rect x="13" y="10" width="1" height="1" fill="#000"/><rect x="4" y="11" width="1" height="1" fill="#000"/><rect x="5" y="11" width="3" height="1" fill="#fff"/><rect x="8" y="11" width="1" height="1" fill="#000"/><rect x="9" y="11" width="4" height="1" fill="#fff"/><rect x="13" y="11" width="1" height="1" fill="#000"/><rect x="4" y="12" width="5" height="1" fill="#000"/><rect x="9" y="12" width="4" height="1" fill="#fff"/><rect x="13" y="12" width="1" height="1" fill="#000"/><rect x="8" y="13" width="6" height="1" fill="#000"/></svg>
<div class="a" style="left:36px;top:134px;width:171px;height:16px;background:#003366"></div>
<div class="a" style="left:36px;top:134px;width:171px;height:16px;border:1px dotted #cccccc"></div>
<div class="a " style="left:39px;top:135px;white-space:pre;color:#fff;line-height:14px">Workspace 'userfunc': 1 project(s)</div>
<svg class="a" style="left:39px;top:151px;" width="16" height="14" viewBox="0 0 16 14" shape-rendering="crispEdges"><rect x="4" y="0" width="11" height="1" fill="#000080"/><rect x="4" y="1" width="1" height="1" fill="#000"/><rect x="5" y="1" width="9" height="1" fill="#fff"/><rect x="14" y="1" width="1" height="1" fill="#000"/><rect x="4" y="2" width="1" height="1" fill="#000"/><rect x="5" y="2" width="3" height="1" fill="#fff"/><rect x="8" y="2" width="1" height="1" fill="#000"/><rect x="9" y="2" width="1" height="1" fill="#fff"/><rect x="10" y="2" width="3" height="1" fill="#000"/><rect x="13" y="2" width="1" height="1" fill="#fff"/><rect x="14" y="2" width="1" height="1" fill="#000"/><rect x="0" y="3" width="6" height="1" fill="#ffff99"/><rect x="6" y="3" width="2" height="1" fill="#fff"/><rect x="8" y="3" width="1" height="1" fill="#000"/><rect x="9" y="3" width="1" height="1" fill="#fff"/><rect x="10" y="3" width="1" height="1" fill="#000"/><rect x="11" y="3" width="1" height="1" fill="#fff"/><rect x="12" y="3" width="1" height="1" fill="#000"/><rect x="13" y="3" width="1" height="1" fill="#fff"/><rect x="14" y="3" width="1" height="1" fill="#000"/><rect x="0" y="4" width="1" height="1" fill="#ffff99"/><rect x="1" y="4" width="6" height="1" fill="#000"/><rect x="7" y="4" width="1" height="1" fill="#fff"/><rect x="8" y="4" width="1" height="1" fill="#000"/><rect x="9" y="4" width="1" height="1" fill="#fff"/><rect x="10" y="4" width="3" height="1" fill="#000"/><rect x="13" y="4" width="1" height="1" fill="#fff"/><rect x="14" y="4" width="1" height="1" fill="#000"/><rect x="0" y="5" width="1" height="1" fill="#ffff99"/><rect x="1" y="5" width="1" height="1" fill="#000"/><rect x="2" y="5" width="4" height="1" fill="#fff"/><rect x="6" y="5" width="1" height="1" fill="#000"/><rect x="7" y="5" width="7" height="1" fill="#fff"/><rect x="14" y="5" width="1" height="1" fill="#000"/><rect x="0" y="6" width="1" height="1" fill="#ffff99"/><rect x="1" y="6" width="7" height="1" fill="#000"/><rect x="8" y="6" width="1" height="1" fill="#fff"/><rect x="9" y="6" width="3" height="1" fill="#000"/><rect x="12" y="6" width="1" height="1" fill="#fff"/><rect x="13" y="6" width="2" height="1" fill="#000"/><rect x="0" y="7" width="1" height="1" fill="#ffff99"/><rect x="1" y="7" width="1" height="1" fill="#000"/><rect x="2" y="7" width="6" height="1" fill="#fff"/><rect x="8" y="7" width="2" height="1" fill="#000"/><rect x="10" y="7" width="1" height="1" fill="#fff"/><rect x="11" y="7" width="1" height="1" fill="#000"/><rect x="12" y="7" width="1" height="1" fill="#fff"/><rect x="13" y="7" width="2" height="1" fill="#000"/><rect x="0" y="8" width="1" height="1" fill="#ffff99"/><rect x="1" y="8" width="1" height="1" fill="#000"/><rect x="2" y="8" width="5" height="1" fill="#000080"/><rect x="7" y="8" width="1" height="1" fill="#000"/><rect x="8" y="8" width="1" height="1" fill="#fff"/><rect x="9" y="8" width="1" height="1" fill="#000"/><rect x="10" y="8" width="1" height="1" fill="#fff"/><rect x="11" y="8" width="1" height="1" fill="#000"/><rect x="12" y="8" width="1" height="1" fill="#fff"/><rect x="13" y="8" width="2" height="1" fill="#000"/><rect x="1" y="9" width="1" height="1" fill="#000"/><rect x="2" y="9" width="5" height="1" fill="#fff"/><rect x="7" y="9" width="1" height="1" fill="#000"/><rect x="8" y="9" width="1" height="1" fill="#fff"/><rect x="9" y="9" width="3" height="1" fill="#000"/><rect x="12" y="9" width="1" height="1" fill="#fff"/><rect x="13" y="9" width="2" height="1" fill="#000"/><rect x="1" y="10" width="1" height="1" fill="#000"/><rect x="2" y="10" width="5" height="1" fill="#000080"/><rect x="7" y="10" width="1" height="1" fill="#000"/><rect x="8" y="10" width="6" height="1" fill="#fff"/><rect x="14" y="10" width="1" height="1" fill="#000"/><rect x="1" y="11" width="1" height="1" fill="#000"/><rect x="2" y="11" width="5" height="1" fill="#fff"/><rect x="7" y="11" width="8" height="1" fill="#000"/><rect x="1" y="12" width="1" height="1" fill="#000"/><rect x="2" y="12" width="5" height="1" fill="#000080"/><rect x="7" y="12" width="1" height="1" fill="#000"/><rect x="1" y="13" width="7" height="1" fill="#000"/></svg>
<div class="a " style="left:60px;top:152px;white-space:pre;font-weight:bold;line-height:14px;letter-spacing:0.3px">userfunc files</div>
<svg class="a" style="left:59px;top:168px;" width="15" height="12" viewBox="0 0 15 12" shape-rendering="crispEdges"><rect x="3" y="0" width="4" height="1" fill="#808080"/><rect x="2" y="1" width="1" height="1" fill="#808080"/><rect x="3" y="1" width="4" height="1" fill="#ffff99"/><rect x="7" y="1" width="1" height="1" fill="#808080"/><rect x="1" y="2" width="1" height="1" fill="#808080"/><rect x="2" y="2" width="1" height="1" fill="#ffff99"/><rect x="3" y="2" width="1" height="1" fill="#fff"/><rect x="4" y="2" width="1" height="1" fill="#ffff99"/><rect x="5" y="2" width="1" height="1" fill="#fff"/><rect x="6" y="2" width="2" height="1" fill="#ffff99"/><rect x="8" y="2" width="5" height="1" fill="#808080"/><rect x="1" y="3" width="1" height="1" fill="#808080"/><rect x="2" y="3" width="1" height="1" fill="#fff"/><rect x="3" y="3" width="1" height="1" fill="#ffff99"/><rect x="4" y="3" width="1" height="1" fill="#fff"/><rect x="5" y="3" width="1" height="1" fill="#ffff99"/><rect x="6" y="3" width="1" height="1" fill="#fff"/><rect x="7" y="3" width="1" height="1" fill="#ffff99"/><rect x="8" y="3" width="1" height="1" fill="#fff"/><rect x="9" y="3" width="1" height="1" fill="#ffff99"/><rect x="10" y="3" width="1" height="1" fill="#fff"/><rect x="11" y="3" width="1" height="1" fill="#ffff99"/><rect x="12" y="3" width="1" height="1" fill="#808080"/><rect x="1" y="4" width="1" height="1" fill="#808080"/><rect x="2" y="4" width="1" height="1" fill="#ffff99"/><rect x="3" y="4" width="1" height="1" fill="#fff"/><rect x="4" y="4" width="1" height="1" fill="#ffff99"/><rect x="5" y="4" width="1" height="1" fill="#fff"/><rect x="6" y="4" width="1" height="1" fill="#ffff99"/><rect x="7" y="4" width="1" height="1" fill="#fff"/><rect x="8" y="4" width="1" height="1" fill="#ffff99"/><rect x="9" y="4" width="1" height="1" fill="#fff"/><rect x="10" y="4" width="1" height="1" fill="#ffff99"/><rect x="11" y="4" width="1" height="1" fill="#fff"/><rect x="12" y="4" width="1" height="1" fill="#808080"/><rect x="13" y="4" width="1" height="1" fill="#000"/><rect x="0" y="5" width="11" height="1" fill="#808080"/><rect x="11" y="5" width="1" height="1" fill="#ffff99"/><rect x="12" y="5" width="1" height="1" fill="#808080"/><rect x="13" y="5" width="1" height="1" fill="#000"/><rect x="0" y="6" width="1" height="1" fill="#808080"/><rect x="1" y="6" width="1" height="1" fill="#ffff99"/><rect x="2" y="6" width="1" height="1" fill="#fff"/><rect x="3" y="6" width="1" height="1" fill="#ffff99"/><rect x="4" y="6" width="1" height="1" fill="#fff"/><rect x="5" y="6" width="1" height="1" fill="#ffff99"/><rect x="6" y="6" width="1" height="1" fill="#fff"/><rect x="7" y="6" width="1" height="1" fill="#ffff99"/><rect x="8" y="6" width="1" height="1" fill="#fff"/><rect x="9" y="6" width="1" height="1" fill="#ffff99"/><rect x="10" y="6" width="1" height="1" fill="#fff"/><rect x="11" y="6" width="1" height="1" fill="#808080"/><rect x="12" y="6" width="2" height="1" fill="#000"/><rect x="1" y="7" width="1" height="1" fill="#808080"/><rect x="2" y="7" width="1" height="1" fill="#fff"/><rect x="3" y="7" width="1" height="1" fill="#ffff99"/><rect x="4" y="7" width="1" height="1" fill="#fff"/><rect x="5" y="7" width="1" height="1" fill="#ffff99"/><rect x="6" y="7" width="1" height="1" fill="#fff"/><rect x="7" y="7" width="1" height="1" fill="#ffff99"/><rect x="8" y="7" width="1" height="1" fill="#fff"/><rect x="9" y="7" width="1" height="1" fill="#ffff99"/><rect x="10" y="7" width="1" height="1" fill="#fff"/><rect x="11" y="7" width="1" height="1" fill="#ffff99"/><rect x="12" y="7" width="1" height="1" fill="#808080"/><rect x="13" y="7" width="1" height="1" fill="#000"/><rect x="1" y="8" width="1" height="1" fill="#808080"/><rect x="2" y="8" width="1" height="1" fill="#ffff99"/><rect x="3" y="8" width="1" height="1" fill="#fff"/><rect x="4" y="8" width="1" height="1" fill="#ffff99"/><rect x="5" y="8" width="1" height="1" fill="#fff"/><rect x="6" y="8" width="1" height="1" fill="#ffff99"/><rect x="7" y="8" width="1" height="1" fill="#fff"/><rect x="8" y="8" width="1" height="1" fill="#ffff99"/><rect x="9" y="8" width="1" height="1" fill="#fff"/><rect x="10" y="8" width="1" height="1" fill="#ffff99"/><rect x="11" y="8" width="1" height="1" fill="#fff"/><rect x="12" y="8" width="1" height="1" fill="#ffff99"/><rect x="13" y="8" width="1" height="1" fill="#808080"/><rect x="14" y="8" width="1" height="1" fill="#000"/><rect x="2" y="9" width="1" height="1" fill="#808080"/><rect x="3" y="9" width="1" height="1" fill="#ffff99"/><rect x="4" y="9" width="1" height="1" fill="#fff"/><rect x="5" y="9" width="1" height="1" fill="#ffff99"/><rect x="6" y="9" width="1" height="1" fill="#fff"/><rect x="7" y="9" width="1" height="1" fill="#ffff99"/><rect x="8" y="9" width="1" height="1" fill="#fff"/><rect x="9" y="9" width="1" height="1" fill="#ffff99"/><rect x="10" y="9" width="1" height="1" fill="#fff"/><rect x="11" y="9" width="1" height="1" fill="#ffff99"/><rect x="12" y="9" width="1" height="1" fill="#fff"/><rect x="13" y="9" width="1" height="1" fill="#808080"/><rect x="14" y="9" width="1" height="1" fill="#000"/><rect x="2" y="10" width="12" height="1" fill="#808080"/><rect x="14" y="10" width="1" height="1" fill="#000"/><rect x="3" y="11" width="12" height="1" fill="#000"/></svg>
<div class="a " style="left:78px;top:168px;white-space:pre;line-height:14px;letter-spacing:-0.3px">Source Files</div>
<svg class="a" style="left:79px;top:183px;" width="12" height="15" viewBox="0 0 12 15" shape-rendering="crispEdges"><rect x="0" y="0" width="9" height="1" fill="#000"/><rect x="0" y="1" width="1" height="1" fill="#000"/><rect x="1" y="1" width="7" height="1" fill="#fff"/><rect x="8" y="1" width="2" height="1" fill="#000"/><rect x="0" y="2" width="1" height="1" fill="#000"/><rect x="1" y="2" width="3" height="1" fill="#fff"/><rect x="4" y="2" width="1" height="1" fill="#000080"/><rect x="5" y="2" width="3" height="1" fill="#fff"/><rect x="8" y="2" width="1" height="1" fill="#000"/><rect x="9" y="2" width="1" height="1" fill="#fff"/><rect x="10" y="2" width="1" height="1" fill="#000"/><rect x="0" y="3" width="1" height="1" fill="#000"/><rect x="1" y="3" width="3" height="1" fill="#fff"/><rect x="4" y="3" width="1" height="1" fill="#000080"/><rect x="5" y="3" width="3" height="1" fill="#fff"/><rect x="8" y="3" width="4" height="1" fill="#000"/><rect x="0" y="4" width="1" height="1" fill="#000"/><rect x="1" y="4" width="3" height="1" fill="#fff"/><rect x="4" y="4" width="1" height="1" fill="#000080"/><rect x="5" y="4" width="6" height="1" fill="#fff"/><rect x="11" y="4" width="1" height="1" fill="#000"/><rect x="0" y="5" width="1" height="1" fill="#000"/><rect x="1" y="5" width="1" height="1" fill="#fff"/><rect x="2" y="5" width="5" height="1" fill="#000080"/><rect x="7" y="5" width="4" height="1" fill="#fff"/><rect x="11" y="5" width="1" height="1" fill="#000"/><rect x="0" y="6" width="1" height="1" fill="#000"/><rect x="1" y="6" width="2" height="1" fill="#fff"/><rect x="3" y="6" width="3" height="1" fill="#000080"/><rect x="6" y="6" width="5" height="1" fill="#fff"/><rect x="11" y="6" width="1" height="1" fill="#000"/><rect x="0" y="7" width="1" height="1" fill="#000"/><rect x="1" y="7" width="3" height="1" fill="#fff"/><rect x="4" y="7" width="1" height="1" fill="#000080"/><rect x="5" y="7" width="6" height="1" fill="#fff"/><rect x="11" y="7" width="1" height="1" fill="#000"/><rect x="0" y="8" width="1" height="1" fill="#000"/><rect x="1" y="8" width="10" height="1" fill="#fff"/><rect x="11" y="8" width="1" height="1" fill="#000"/><rect x="0" y="9" width="1" height="1" fill="#000"/><rect x="1" y="9" width="1" height="1" fill="#fff"/><rect x="2" y="9" width="1" height="1" fill="#000"/><rect x="3" y="9" width="1" height="1" fill="#fff"/><rect x="4" y="9" width="1" height="1" fill="#000"/><rect x="5" y="9" width="1" height="1" fill="#fff"/><rect x="6" y="9" width="1" height="1" fill="#000"/><rect x="7" y="9" width="1" height="1" fill="#fff"/><rect x="8" y="9" width="1" height="1" fill="#000"/><rect x="9" y="9" width="2" height="1" fill="#fff"/><rect x="11" y="9" width="1" height="1" fill="#000"/><rect x="0" y="10" width="1" height="1" fill="#000"/><rect x="1" y="10" width="10" height="1" fill="#fff"/><rect x="11" y="10" width="1" height="1" fill="#000"/><rect x="0" y="11" width="1" height="1" fill="#000"/><rect x="1" y="11" width="1" height="1" fill="#fff"/><rect x="2" y="11" width="1" height="1" fill="#000"/><rect x="3" y="11" width="1" height="1" fill="#fff"/><rect x="4" y="11" width="1" height="1" fill="#000"/><rect x="5" y="11" width="1" height="1" fill="#fff"/><rect x="6" y="11" width="1" height="1" fill="#000"/><rect x="7" y="11" width="1" height="1" fill="#fff"/><rect x="8" y="11" width="1" height="1" fill="#000"/><rect x="9" y="11" width="2" height="1" fill="#fff"/><rect x="11" y="11" width="1" height="1" fill="#000"/><rect x="0" y="12" width="1" height="1" fill="#000"/><rect x="1" y="12" width="10" height="1" fill="#fff"/><rect x="11" y="12" width="1" height="1" fill="#000"/><rect x="0" y="13" width="1" height="1" fill="#000"/><rect x="1" y="13" width="10" height="1" fill="#fff"/><rect x="11" y="13" width="1" height="1" fill="#000"/><rect x="0" y="14" width="12" height="1" fill="#000"/></svg>
<div class="a " style="left:98px;top:184px;white-space:pre;line-height:14px;letter-spacing:-0.1px">zclient.cpp</div>
<svg class="a" style="left:59px;top:201px;" width="15" height="12" viewBox="0 0 15 12" shape-rendering="crispEdges"><rect x="2" y="0" width="5" height="1" fill="#808080"/><rect x="1" y="1" width="1" height="1" fill="#808080"/><rect x="2" y="1" width="5" height="1" fill="#ffff99"/><rect x="7" y="1" width="1" height="1" fill="#808080"/><rect x="0" y="2" width="14" height="1" fill="#808080"/><rect x="0" y="3" width="1" height="1" fill="#808080"/><rect x="1" y="3" width="1" height="1" fill="#ffff99"/><rect x="2" y="3" width="1" height="1" fill="#fff"/><rect x="3" y="3" width="1" height="1" fill="#ffff99"/><rect x="4" y="3" width="1" height="1" fill="#fff"/><rect x="5" y="3" width="1" height="1" fill="#ffff99"/><rect x="6" y="3" width="1" height="1" fill="#fff"/><rect x="7" y="3" width="1" height="1" fill="#ffff99"/><rect x="8" y="3" width="1" height="1" fill="#fff"/><rect x="9" y="3" width="1" height="1" fill="#ffff99"/><rect x="10" y="3" width="1" height="1" fill="#fff"/><rect x="11" y="3" width="1" height="1" fill="#ffff99"/><rect x="12" y="3" width="1" height="1" fill="#fff"/><rect x="13" y="3" width="1" height="1" fill="#808080"/><rect x="14" y="3" width="1" height="1" fill="#000"/><rect x="0" y="4" width="1" height="1" fill="#808080"/><rect x="1" y="4" width="1" height="1" fill="#fff"/><rect x="2" y="4" width="1" height="1" fill="#ffff99"/><rect x="3" y="4" width="1" height="1" fill="#fff"/><rect x="4" y="4" width="1" height="1" fill="#ffff99"/><rect x="5" y="4" width="1" height="1" fill="#fff"/><rect x="6" y="4" width="1" height="1" fill="#ffff99"/><rect x="7" y="4" width="1" height="1" fill="#fff"/><rect x="8" y="4" width="1" height="1" fill="#ffff99"/><rect x="9" y="4" width="1" height="1" fill="#fff"/><rect x="10" y="4" width="1" height="1" fill="#ffff99"/><rect x="11" y="4" width="1" height="1" fill="#fff"/><rect x="12" y="4" width="1" height="1" fill="#ffff99"/><rect x="13" y="4" width="1" height="1" fill="#808080"/><rect x="14" y="4" width="1" height="1" fill="#000"/><rect x="0" y="5" width="1" height="1" fill="#808080"/><rect x="1" y="5" width="1" height="1" fill="#ffff99"/><rect x="2" y="5" width="1" height="1" fill="#fff"/><rect x="3" y="5" width="1" height="1" fill="#ffff99"/><rect x="4" y="5" width="1" height="1" fill="#fff"/><rect x="5" y="5" width="1" height="1" fill="#ffff99"/><rect x="6" y="5" width="1" height="1" fill="#fff"/><rect x="7" y="5" width="1" height="1" fill="#ffff99"/><rect x="8" y="5" width="1" height="1" fill="#fff"/><rect x="9" y="5" width="1" height="1" fill="#ffff99"/><rect x="10" y="5" width="1" height="1" fill="#fff"/><rect x="11" y="5" width="1" height="1" fill="#ffff99"/><rect x="12" y="5" width="1" height="1" fill="#fff"/><rect x="13" y="5" width="1" height="1" fill="#808080"/><rect x="14" y="5" width="1" height="1" fill="#000"/><rect x="0" y="6" width="1" height="1" fill="#808080"/><rect x="1" y="6" width="1" height="1" fill="#fff"/><rect x="2" y="6" width="1" height="1" fill="#ffff99"/><rect x="3" y="6" width="1" height="1" fill="#fff"/><rect x="4" y="6" width="1" height="1" fill="#ffff99"/><rect x="5" y="6" width="1" height="1" fill="#fff"/><rect x="6" y="6" width="1" height="1" fill="#ffff99"/><rect x="7" y="6" width="1" height="1" fill="#fff"/><rect x="8" y="6" width="1" height="1" fill="#ffff99"/><rect x="9" y="6" width="1" height="1" fill="#fff"/><rect x="10" y="6" width="1" height="1" fill="#ffff99"/><rect x="11" y="6" width="1" height="1" fill="#fff"/><rect x="12" y="6" width="1" height="1" fill="#ffff99"/><rect x="13" y="6" width="1" height="1" fill="#808080"/><rect x="14" y="6" width="1" height="1" fill="#000"/><rect x="0" y="7" width="1" height="1" fill="#808080"/><rect x="1" y="7" width="1" height="1" fill="#ffff99"/><rect x="2" y="7" width="1" height="1" fill="#fff"/><rect x="3" y="7" width="1" height="1" fill="#ffff99"/><rect x="4" y="7" width="1" height="1" fill="#fff"/><rect x="5" y="7" width="1" height="1" fill="#ffff99"/><rect x="6" y="7" width="1" height="1" fill="#fff"/><rect x="7" y="7" width="1" height="1" fill="#ffff99"/><rect x="8" y="7" width="1" height="1" fill="#fff"/><rect x="9" y="7" width="1" height="1" fill="#ffff99"/><rect x="10" y="7" width="1" height="1" fill="#fff"/><rect x="11" y="7" width="1" height="1" fill="#ffff99"/><rect x="12" y="7" width="1" height="1" fill="#fff"/><rect x="13" y="7" width="1" height="1" fill="#808080"/><rect x="14" y="7" width="1" height="1" fill="#000"/><rect x="0" y="8" width="1" height="1" fill="#808080"/><rect x="1" y="8" width="1" height="1" fill="#fff"/><rect x="2" y="8" width="1" height="1" fill="#ffff99"/><rect x="3" y="8" width="1" height="1" fill="#fff"/><rect x="4" y="8" width="1" height="1" fill="#ffff99"/><rect x="5" y="8" width="1" height="1" fill="#fff"/><rect x="6" y="8" width="1" height="1" fill="#ffff99"/><rect x="7" y="8" width="1" height="1" fill="#fff"/><rect x="8" y="8" width="1" height="1" fill="#ffff99"/><rect x="9" y="8" width="1" height="1" fill="#fff"/><rect x="10" y="8" width="1" height="1" fill="#ffff99"/><rect x="11" y="8" width="1" height="1" fill="#fff"/><rect x="12" y="8" width="1" height="1" fill="#ffff99"/><rect x="13" y="8" width="1" height="1" fill="#808080"/><rect x="14" y="8" width="1" height="1" fill="#000"/><rect x="0" y="9" width="1" height="1" fill="#808080"/><rect x="1" y="9" width="1" height="1" fill="#ffff99"/><rect x="2" y="9" width="1" height="1" fill="#fff"/><rect x="3" y="9" width="1" height="1" fill="#ffff99"/><rect x="4" y="9" width="1" height="1" fill="#fff"/><rect x="5" y="9" width="1" height="1" fill="#ffff99"/><rect x="6" y="9" width="1" height="1" fill="#fff"/><rect x="7" y="9" width="1" height="1" fill="#ffff99"/><rect x="8" y="9" width="1" height="1" fill="#fff"/><rect x="9" y="9" width="1" height="1" fill="#ffff99"/><rect x="10" y="9" width="1" height="1" fill="#fff"/><rect x="11" y="9" width="1" height="1" fill="#ffff99"/><rect x="12" y="9" width="1" height="1" fill="#fff"/><rect x="13" y="9" width="1" height="1" fill="#808080"/><rect x="14" y="9" width="1" height="1" fill="#000"/><rect x="0" y="10" width="14" height="1" fill="#808080"/><rect x="14" y="10" width="1" height="1" fill="#000"/><rect x="1" y="11" width="14" height="1" fill="#000"/></svg>
<div class="a " style="left:78px;top:200px;white-space:pre;line-height:14px;letter-spacing:-0.2px">Header Files</div>
<svg class="a" style="left:59px;top:217px;" width="15" height="12" viewBox="0 0 15 12" shape-rendering="crispEdges"><rect x="2" y="0" width="5" height="1" fill="#808080"/><rect x="1" y="1" width="1" height="1" fill="#808080"/><rect x="2" y="1" width="5" height="1" fill="#ffff99"/><rect x="7" y="1" width="1" height="1" fill="#808080"/><rect x="0" y="2" width="14" height="1" fill="#808080"/><rect x="0" y="3" width="1" height="1" fill="#808080"/><rect x="1" y="3" width="1" height="1" fill="#ffff99"/><rect x="2" y="3" width="1" height="1" fill="#fff"/><rect x="3" y="3" width="1" height="1" fill="#ffff99"/><rect x="4" y="3" width="1" height="1" fill="#fff"/><rect x="5" y="3" width="1" height="1" fill="#ffff99"/><rect x="6" y="3" width="1" height="1" fill="#fff"/><rect x="7" y="3" width="1" height="1" fill="#ffff99"/><rect x="8" y="3" width="1" height="1" fill="#fff"/><rect x="9" y="3" width="1" height="1" fill="#ffff99"/><rect x="10" y="3" width="1" height="1" fill="#fff"/><rect x="11" y="3" width="1" height="1" fill="#ffff99"/><rect x="12" y="3" width="1" height="1" fill="#fff"/><rect x="13" y="3" width="1" height="1" fill="#808080"/><rect x="14" y="3" width="1" height="1" fill="#000"/><rect x="0" y="4" width="1" height="1" fill="#808080"/><rect x="1" y="4" width="1" height="1" fill="#fff"/><rect x="2" y="4" width="1" height="1" fill="#ffff99"/><rect x="3" y="4" width="1" height="1" fill="#fff"/><rect x="4" y="4" width="1" height="1" fill="#ffff99"/><rect x="5" y="4" width="1" height="1" fill="#fff"/><rect x="6" y="4" width="1" height="1" fill="#ffff99"/><rect x="7" y="4" width="1" height="1" fill="#fff"/><rect x="8" y="4" width="1" height="1" fill="#ffff99"/><rect x="9" y="4" width="1" height="1" fill="#fff"/><rect x="10" y="4" width="1" height="1" fill="#ffff99"/><rect x="11" y="4" width="1" height="1" fill="#fff"/><rect x="12" y="4" width="1" height="1" fill="#ffff99"/><rect x="13" y="4" width="1" height="1" fill="#808080"/><rect x="14" y="4" width="1" height="1" fill="#000"/><rect x="0" y="5" width="1" height="1" fill="#808080"/><rect x="1" y="5" width="1" height="1" fill="#ffff99"/><rect x="2" y="5" width="1" height="1" fill="#fff"/><rect x="3" y="5" width="1" height="1" fill="#ffff99"/><rect x="4" y="5" width="1" height="1" fill="#fff"/><rect x="5" y="5" width="1" height="1" fill="#ffff99"/><rect x="6" y="5" width="1" height="1" fill="#fff"/><rect x="7" y="5" width="1" height="1" fill="#ffff99"/><rect x="8" y="5" width="1" height="1" fill="#fff"/><rect x="9" y="5" width="1" height="1" fill="#ffff99"/><rect x="10" y="5" width="1" height="1" fill="#fff"/><rect x="11" y="5" width="1" height="1" fill="#ffff99"/><rect x="12" y="5" width="1" height="1" fill="#fff"/><rect x="13" y="5" width="1" height="1" fill="#808080"/><rect x="14" y="5" width="1" height="1" fill="#000"/><rect x="0" y="6" width="1" height="1" fill="#808080"/><rect x="1" y="6" width="1" height="1" fill="#fff"/><rect x="2" y="6" width="1" height="1" fill="#ffff99"/><rect x="3" y="6" width="1" height="1" fill="#fff"/><rect x="4" y="6" width="1" height="1" fill="#ffff99"/><rect x="5" y="6" width="1" height="1" fill="#fff"/><rect x="6" y="6" width="1" height="1" fill="#ffff99"/><rect x="7" y="6" width="1" height="1" fill="#fff"/><rect x="8" y="6" width="1" height="1" fill="#ffff99"/><rect x="9" y="6" width="1" height="1" fill="#fff"/><rect x="10" y="6" width="1" height="1" fill="#ffff99"/><rect x="11" y="6" width="1" height="1" fill="#fff"/><rect x="12" y="6" width="1" height="1" fill="#ffff99"/><rect x="13" y="6" width="1" height="1" fill="#808080"/><rect x="14" y="6" width="1" height="1" fill="#000"/><rect x="0" y="7" width="1" height="1" fill="#808080"/><rect x="1" y="7" width="1" height="1" fill="#ffff99"/><rect x="2" y="7" width="1" height="1" fill="#fff"/><rect x="3" y="7" width="1" height="1" fill="#ffff99"/><rect x="4" y="7" width="1" height="1" fill="#fff"/><rect x="5" y="7" width="1" height="1" fill="#ffff99"/><rect x="6" y="7" width="1" height="1" fill="#fff"/><rect x="7" y="7" width="1" height="1" fill="#ffff99"/><rect x="8" y="7" width="1" height="1" fill="#fff"/><rect x="9" y="7" width="1" height="1" fill="#ffff99"/><rect x="10" y="7" width="1" height="1" fill="#fff"/><rect x="11" y="7" width="1" height="1" fill="#ffff99"/><rect x="12" y="7" width="1" height="1" fill="#fff"/><rect x="13" y="7" width="1" height="1" fill="#808080"/><rect x="14" y="7" width="1" height="1" fill="#000"/><rect x="0" y="8" width="1" height="1" fill="#808080"/><rect x="1" y="8" width="1" height="1" fill="#fff"/><rect x="2" y="8" width="1" height="1" fill="#ffff99"/><rect x="3" y="8" width="1" height="1" fill="#fff"/><rect x="4" y="8" width="1" height="1" fill="#ffff99"/><rect x="5" y="8" width="1" height="1" fill="#fff"/><rect x="6" y="8" width="1" height="1" fill="#ffff99"/><rect x="7" y="8" width="1" height="1" fill="#fff"/><rect x="8" y="8" width="1" height="1" fill="#ffff99"/><rect x="9" y="8" width="1" height="1" fill="#fff"/><rect x="10" y="8" width="1" height="1" fill="#ffff99"/><rect x="11" y="8" width="1" height="1" fill="#fff"/><rect x="12" y="8" width="1" height="1" fill="#ffff99"/><rect x="13" y="8" width="1" height="1" fill="#808080"/><rect x="14" y="8" width="1" height="1" fill="#000"/><rect x="0" y="9" width="1" height="1" fill="#808080"/><rect x="1" y="9" width="1" height="1" fill="#ffff99"/><rect x="2" y="9" width="1" height="1" fill="#fff"/><rect x="3" y="9" width="1" height="1" fill="#ffff99"/><rect x="4" y="9" width="1" height="1" fill="#fff"/><rect x="5" y="9" width="1" height="1" fill="#ffff99"/><rect x="6" y="9" width="1" height="1" fill="#fff"/><rect x="7" y="9" width="1" height="1" fill="#ffff99"/><rect x="8" y="9" width="1" height="1" fill="#fff"/><rect x="9" y="9" width="1" height="1" fill="#ffff99"/><rect x="10" y="9" width="1" height="1" fill="#fff"/><rect x="11" y="9" width="1" height="1" fill="#ffff99"/><rect x="12" y="9" width="1" height="1" fill="#fff"/><rect x="13" y="9" width="1" height="1" fill="#808080"/><rect x="14" y="9" width="1" height="1" fill="#000"/><rect x="0" y="10" width="14" height="1" fill="#808080"/><rect x="14" y="10" width="1" height="1" fill="#000"/><rect x="1" y="11" width="14" height="1" fill="#000"/></svg>
<div class="a " style="left:78px;top:216px;white-space:pre;line-height:14px;letter-spacing:-0.2px">Resource Files</div>
<svg class="a" style="left:59px;top:233px;" width="15" height="12" viewBox="0 0 15 12" shape-rendering="crispEdges"><rect x="2" y="0" width="5" height="1" fill="#808080"/><rect x="1" y="1" width="1" height="1" fill="#808080"/><rect x="2" y="1" width="5" height="1" fill="#ffff99"/><rect x="7" y="1" width="1" height="1" fill="#808080"/><rect x="0" y="2" width="14" height="1" fill="#808080"/><rect x="0" y="3" width="1" height="1" fill="#808080"/><rect x="1" y="3" width="1" height="1" fill="#ffff99"/><rect x="2" y="3" width="1" height="1" fill="#fff"/><rect x="3" y="3" width="1" height="1" fill="#ffff99"/><rect x="4" y="3" width="1" height="1" fill="#fff"/><rect x="5" y="3" width="1" height="1" fill="#ffff99"/><rect x="6" y="3" width="1" height="1" fill="#fff"/><rect x="7" y="3" width="1" height="1" fill="#ffff99"/><rect x="8" y="3" width="1" height="1" fill="#fff"/><rect x="9" y="3" width="1" height="1" fill="#ffff99"/><rect x="10" y="3" width="1" height="1" fill="#fff"/><rect x="11" y="3" width="1" height="1" fill="#ffff99"/><rect x="12" y="3" width="1" height="1" fill="#fff"/><rect x="13" y="3" width="1" height="1" fill="#808080"/><rect x="14" y="3" width="1" height="1" fill="#000"/><rect x="0" y="4" width="1" height="1" fill="#808080"/><rect x="1" y="4" width="1" height="1" fill="#fff"/><rect x="2" y="4" width="1" height="1" fill="#ffff99"/><rect x="3" y="4" width="1" height="1" fill="#fff"/><rect x="4" y="4" width="1" height="1" fill="#ffff99"/><rect x="5" y="4" width="1" height="1" fill="#fff"/><rect x="6" y="4" width="1" height="1" fill="#ffff99"/><rect x="7" y="4" width="1" height="1" fill="#fff"/><rect x="8" y="4" width="1" height="1" fill="#ffff99"/><rect x="9" y="4" width="1" height="1" fill="#fff"/><rect x="10" y="4" width="1" height="1" fill="#ffff99"/><rect x="11" y="4" width="1" height="1" fill="#fff"/><rect x="12" y="4" width="1" height="1" fill="#ffff99"/><rect x="13" y="4" width="1" height="1" fill="#808080"/><rect x="14" y="4" width="1" height="1" fill="#000"/><rect x="0" y="5" width="1" height="1" fill="#808080"/><rect x="1" y="5" width="1" height="1" fill="#ffff99"/><rect x="2" y="5" width="1" height="1" fill="#fff"/><rect x="3" y="5" width="1" height="1" fill="#ffff99"/><rect x="4" y="5" width="1" height="1" fill="#fff"/><rect x="5" y="5" width="1" height="1" fill="#ffff99"/><rect x="6" y="5" width="1" height="1" fill="#fff"/><rect x="7" y="5" width="1" height="1" fill="#ffff99"/><rect x="8" y="5" width="1" height="1" fill="#fff"/><rect x="9" y="5" width="1" height="1" fill="#ffff99"/><rect x="10" y="5" width="1" height="1" fill="#fff"/><rect x="11" y="5" width="1" height="1" fill="#ffff99"/><rect x="12" y="5" width="1" height="1" fill="#fff"/><rect x="13" y="5" width="1" height="1" fill="#808080"/><rect x="14" y="5" width="1" height="1" fill="#000"/><rect x="0" y="6" width="1" height="1" fill="#808080"/><rect x="1" y="6" width="1" height="1" fill="#fff"/><rect x="2" y="6" width="1" height="1" fill="#ffff99"/><rect x="3" y="6" width="1" height="1" fill="#fff"/><rect x="4" y="6" width="1" height="1" fill="#ffff99"/><rect x="5" y="6" width="1" height="1" fill="#fff"/><rect x="6" y="6" width="1" height="1" fill="#ffff99"/><rect x="7" y="6" width="1" height="1" fill="#fff"/><rect x="8" y="6" width="1" height="1" fill="#ffff99"/><rect x="9" y="6" width="1" height="1" fill="#fff"/><rect x="10" y="6" width="1" height="1" fill="#ffff99"/><rect x="11" y="6" width="1" height="1" fill="#fff"/><rect x="12" y="6" width="1" height="1" fill="#ffff99"/><rect x="13" y="6" width="1" height="1" fill="#808080"/><rect x="14" y="6" width="1" height="1" fill="#000"/><rect x="0" y="7" width="1" height="1" fill="#808080"/><rect x="1" y="7" width="1" height="1" fill="#ffff99"/><rect x="2" y="7" width="1" height="1" fill="#fff"/><rect x="3" y="7" width="1" height="1" fill="#ffff99"/><rect x="4" y="7" width="1" height="1" fill="#fff"/><rect x="5" y="7" width="1" height="1" fill="#ffff99"/><rect x="6" y="7" width="1" height="1" fill="#fff"/><rect x="7" y="7" width="1" height="1" fill="#ffff99"/><rect x="8" y="7" width="1" height="1" fill="#fff"/><rect x="9" y="7" width="1" height="1" fill="#ffff99"/><rect x="10" y="7" width="1" height="1" fill="#fff"/><rect x="11" y="7" width="1" height="1" fill="#ffff99"/><rect x="12" y="7" width="1" height="1" fill="#fff"/><rect x="13" y="7" width="1" height="1" fill="#808080"/><rect x="14" y="7" width="1" height="1" fill="#000"/><rect x="0" y="8" width="1" height="1" fill="#808080"/><rect x="1" y="8" width="1" height="1" fill="#fff"/><rect x="2" y="8" width="1" height="1" fill="#ffff99"/><rect x="3" y="8" width="1" height="1" fill="#fff"/><rect x="4" y="8" width="1" height="1" fill="#ffff99"/><rect x="5" y="8" width="1" height="1" fill="#fff"/><rect x="6" y="8" width="1" height="1" fill="#ffff99"/><rect x="7" y="8" width="1" height="1" fill="#fff"/><rect x="8" y="8" width="1" height="1" fill="#ffff99"/><rect x="9" y="8" width="1" height="1" fill="#fff"/><rect x="10" y="8" width="1" height="1" fill="#ffff99"/><rect x="11" y="8" width="1" height="1" fill="#fff"/><rect x="12" y="8" width="1" height="1" fill="#ffff99"/><rect x="13" y="8" width="1" height="1" fill="#808080"/><rect x="14" y="8" width="1" height="1" fill="#000"/><rect x="0" y="9" width="1" height="1" fill="#808080"/><rect x="1" y="9" width="1" height="1" fill="#ffff99"/><rect x="2" y="9" width="1" height="1" fill="#fff"/><rect x="3" y="9" width="1" height="1" fill="#ffff99"/><rect x="4" y="9" width="1" height="1" fill="#fff"/><rect x="5" y="9" width="1" height="1" fill="#ffff99"/><rect x="6" y="9" width="1" height="1" fill="#fff"/><rect x="7" y="9" width="1" height="1" fill="#ffff99"/><rect x="8" y="9" width="1" height="1" fill="#fff"/><rect x="9" y="9" width="1" height="1" fill="#ffff99"/><rect x="10" y="9" width="1" height="1" fill="#fff"/><rect x="11" y="9" width="1" height="1" fill="#ffff99"/><rect x="12" y="9" width="1" height="1" fill="#fff"/><rect x="13" y="9" width="1" height="1" fill="#808080"/><rect x="14" y="9" width="1" height="1" fill="#000"/><rect x="0" y="10" width="14" height="1" fill="#808080"/><rect x="14" y="10" width="1" height="1" fill="#000"/><rect x="1" y="11" width="14" height="1" fill="#000"/></svg>
<div class="a " style="left:78px;top:232px;white-space:pre;line-height:14px;letter-spacing:-0.2px">External Dependencies</div>
<div class="a" style="left:15px;top:473px;width:76px;height:23px;border-style:solid;border-width:0 1px 1px 1px;border-color:#000 #000 #000 #fff;border-radius:0 0 2px 2px"></div>
<div class="a" style="left:16px;top:473px;width:74px;height:22px;border-style:solid;border-width:0 1px 1px 0;border-color:#808080"></div>
<div class="a" style="left:92px;top:472px;width:65px;height:1px;background:#cccccc"></div>
<div class="a" style="left:91px;top:473px;width:66px;height:23px;background:#cccccc;border-style:solid;border-width:0 1px 1px 1px;border-color:#000 #000 #000 #fff;border-radius:0 0 2px 2px"></div>
<div class="a" style="left:92px;top:473px;width:64px;height:22px;border-style:solid;border-width:0 1px 1px 0;border-color:#808080"></div>
<svg class="a" style="left:18px;top:479px;" width="15" height="12" viewBox="0 0 15 12" shape-rendering="crispEdges"><rect x="0" y="0" width="6" height="1" fill="#0000c0"/><rect x="0" y="1" width="6" height="1" fill="#0000c0"/><rect x="0" y="2" width="6" height="1" fill="#0000c0"/><rect x="0" y="3" width="6" height="1" fill="#0000c0"/><rect x="6" y="3" width="3" height="1" fill="#808080"/><rect x="9" y="3" width="5" height="1" fill="#e020e0"/><rect x="0" y="4" width="6" height="1" fill="#0000c0"/><rect x="8" y="4" width="1" height="1" fill="#808080"/><rect x="9" y="4" width="4" height="1" fill="#e020e0"/><rect x="13" y="4" width="1" height="1" fill="#004040"/><rect x="0" y="5" width="6" height="1" fill="#0000c0"/><rect x="8" y="5" width="1" height="1" fill="#808080"/><rect x="9" y="5" width="4" height="1" fill="#e020e0"/><rect x="13" y="5" width="1" height="1" fill="#004040"/><rect x="8" y="6" width="1" height="1" fill="#808080"/><rect x="8" y="7" width="1" height="1" fill="#808080"/><rect x="8" y="8" width="2" height="1" fill="#808080"/><rect x="10" y="8" width="4" height="1" fill="#40e0e0"/><rect x="14" y="8" width="1" height="1" fill="#004040"/><rect x="10" y="9" width="4" height="1" fill="#40e0e0"/><rect x="14" y="9" width="1" height="1" fill="#004040"/><rect x="10" y="10" width="4" height="1" fill="#40e0e0"/><rect x="14" y="10" width="1" height="1" fill="#004040"/><rect x="10" y="11" width="5" height="1" fill="#004040"/></svg>
<div class="a " style="left:37px;top:478px;white-space:pre;line-height:14px;letter-spacing:-0.3px">ClassView</div>
<svg class="a" style="left:96px;top:477px;" width="13" height="15" viewBox="0 0 13 15" shape-rendering="crispEdges"><rect x="0" y="0" width="9" height="1" fill="#000"/><rect x="0" y="1" width="1" height="1" fill="#000"/><rect x="1" y="1" width="7" height="1" fill="#fff"/><rect x="8" y="1" width="2" height="1" fill="#000"/><rect x="0" y="2" width="1" height="1" fill="#000"/><rect x="1" y="2" width="7" height="1" fill="#fff"/><rect x="8" y="2" width="1" height="1" fill="#000"/><rect x="9" y="2" width="1" height="1" fill="#fff"/><rect x="10" y="2" width="1" height="1" fill="#000"/><rect x="0" y="3" width="1" height="1" fill="#000"/><rect x="1" y="3" width="1" height="1" fill="#fff"/><rect x="2" y="3" width="4" height="1" fill="#000"/><rect x="6" y="3" width="2" height="1" fill="#fff"/><rect x="8" y="3" width="4" height="1" fill="#000"/><rect x="0" y="4" width="1" height="1" fill="#000"/><rect x="1" y="4" width="10" height="1" fill="#fff"/><rect x="11" y="4" width="1" height="1" fill="#000"/><rect x="0" y="5" width="1" height="1" fill="#000"/><rect x="1" y="5" width="1" height="1" fill="#fff"/><rect x="2" y="5" width="8" height="1" fill="#000"/><rect x="10" y="5" width="1" height="1" fill="#fff"/><rect x="11" y="5" width="1" height="1" fill="#000"/><rect x="0" y="6" width="1" height="1" fill="#000"/><rect x="1" y="6" width="10" height="1" fill="#fff"/><rect x="11" y="6" width="1" height="1" fill="#000"/><rect x="0" y="7" width="1" height="1" fill="#000"/><rect x="1" y="7" width="1" height="1" fill="#fff"/><rect x="2" y="7" width="8" height="1" fill="#000"/><rect x="10" y="7" width="1" height="1" fill="#fff"/><rect x="11" y="7" width="1" height="1" fill="#000"/><rect x="0" y="8" width="1" height="1" fill="#000"/><rect x="1" y="8" width="10" height="1" fill="#fff"/><rect x="11" y="8" width="1" height="1" fill="#000"/><rect x="0" y="9" width="1" height="1" fill="#000"/><rect x="1" y="9" width="1" height="1" fill="#fff"/><rect x="2" y="9" width="8" height="1" fill="#000"/><rect x="10" y="9" width="1" height="1" fill="#fff"/><rect x="11" y="9" width="1" height="1" fill="#000"/><rect x="0" y="10" width="1" height="1" fill="#000"/><rect x="1" y="10" width="10" height="1" fill="#fff"/><rect x="11" y="10" width="1" height="1" fill="#000"/><rect x="0" y="11" width="1" height="1" fill="#000"/><rect x="1" y="11" width="1" height="1" fill="#fff"/><rect x="2" y="11" width="8" height="1" fill="#000"/><rect x="10" y="11" width="1" height="1" fill="#fff"/><rect x="11" y="11" width="1" height="1" fill="#000"/><rect x="0" y="12" width="1" height="1" fill="#000"/><rect x="1" y="12" width="10" height="1" fill="#fff"/><rect x="11" y="12" width="1" height="1" fill="#000"/><rect x="0" y="13" width="1" height="1" fill="#000"/><rect x="1" y="13" width="10" height="1" fill="#fff"/><rect x="11" y="13" width="1" height="1" fill="#000"/><rect x="0" y="14" width="12" height="1" fill="#000"/></svg>
<div class="a " style="left:113px;top:478px;white-space:pre;line-height:14px;letter-spacing:-0.15px">FileView</div>
<div class="a" style="left:4px;top:499px;width:306px;height:1px;background:#808080"></div>
<div class="a" style="left:4px;top:500px;width:306px;height:1px;background:#fff"></div>
<div class="a" style="left:310px;top:111px;width:752px;height:390px;border-style:solid;border-width:1px;border-color:#000 #fff #fff #000;background:#fff"></div>
<div class="a" style="left:311px;top:499px;width:750px;height:1px;background:#808080"></div>
<div class="a dither" style="left:311px;top:112px;width:20px;height:371px"></div>
<div class="a" style="left:331px;top:112px;width:714px;height:371px;overflow:hidden">
<div class="mono" style="position:absolute;left:0px;top:2px">    <span class="k">int</span> want_opd;
    }DDERAYDATA;

LRESULT CALLBACK WndProc (HWND, UINT, WPARAM, LPARAM);
<span class="k">void</span> WaitForData(HWND hwnd);
<span class="k">extern</span> "C" { <span class="k">int</span> __cdecl PostRequestMessage(<span class="k">char</span> *szItem, <span class="k">char</span> *szBuffer); }
<span class="k">extern</span> "C" { <span class="k">int</span> __cdecl PostArrayTraceMessage(<span class="k">char</span> *szBuffer, DDERAYDATA *RD); }
<span class="k">extern</span> "C" { <span class="k">char</span> *GetString(<span class="k">char</span> *szBuffer, <span class="k">int</span> n, <span class="k">char</span> *szSubString); }
<span class="c">/* change UserFunction name to all UPPERCASE for use when FORTRAN routine used */</span>
<span class="c">/* since FORTRAN compiler makes all names uppercase by default */</span>
<span class="c">/* All subsequent references to UserFunction in the C-code have accordingly */</span>
<span class="c">/* been changed to USERFUNCTION, because C otherwise maintains case. */</span>
<span class="k">extern</span> "C" { <span class="k">void</span> __cdecl USERFUNCTION(<span class="k">char</span> *szCommandLine); }
<span class="k">void</span> remove_quotes(<span class="k">char</span> *s);
<span class="k">void</span> CenterWindow(HWND hwnd);

<span class="k">void</span> MakeEmptyWindow(<span class="k">int</span> text, <span class="k">char</span> *szAppName, <span class="k">char</span> *szOptions);
<span class="k">void</span> Get_2_5_10(<span class="k">double</span> cmax, <span class="k">double</span> *cscale);

<span class="c">/* global variables used by the client code */</span>
<span class="k">char</span> szAppName[] = "ZemaxClient";
<span class="k">int</span> GotData, ngNumRays;
<span class="k">char</span> szGlobalBuffer[5000], szCommandLine[260];
HINSTANCE globalhInstance;
HWND hwndServer, hwndClient;
DDERAYDATA *rdpGRD = NULL;

<span class="k">int</span> WINAPI WinMain (HINSTANCE hInstance, HINSTANCE hPrevInstance, PSTR szCmdLine, <span class="k">int</span> iCmdShow)
{</div>
</div>
<div class="a dither" style="left:1045px;top:112px;width:16px;height:371px"></div>
<div class="a" style="left:1045px;top:112px;width:16px;height:7px;background:#cccccc;box-shadow:inset -1px -1px 0 #000,inset 1px 1px 0 #fff,inset -2px -2px 0 #808080"></div>
<div class="a" style="left:1045px;top:119px;width:16px;height:16px;background:#cccccc;box-shadow:inset -1px -1px 0 #000,inset 1px 1px 0 #fff,inset -2px -2px 0 #808080"></div>
<svg class="a" style="left:1050px;top:125px;" width="7" height="4" viewBox="0 0 7 4" shape-rendering="crispEdges"><rect x="3" y="0" width="1" height="1" fill="#000"/><rect x="2" y="1" width="3" height="1" fill="#000"/><rect x="1" y="2" width="5" height="1" fill="#000"/><rect x="0" y="3" width="7" height="1" fill="#000"/></svg>
<div class="a" style="left:1045px;top:170px;width:16px;height:16px;background:#cccccc;box-shadow:inset -1px -1px 0 #000,inset 1px 1px 0 #fff,inset -2px -2px 0 #808080"></div>
<div class="a" style="left:1045px;top:467px;width:16px;height:16px;background:#cccccc;box-shadow:inset -1px -1px 0 #000,inset 1px 1px 0 #fff,inset -2px -2px 0 #808080"></div>
<svg class="a" style="left:1050px;top:474px;" width="7" height="4" viewBox="0 0 7 4" shape-rendering="crispEdges"><rect x="0" y="0" width="7" height="1" fill="#000"/><rect x="1" y="1" width="5" height="1" fill="#000"/><rect x="2" y="2" width="3" height="1" fill="#000"/><rect x="3" y="3" width="1" height="1" fill="#000"/></svg>
<div class="a dither" style="left:311px;top:483px;width:734px;height:16px"></div>
<div class="a" style="left:311px;top:483px;width:7px;height:16px;background:#cccccc;box-shadow:inset -1px -1px 0 #000,inset 1px 1px 0 #fff,inset -2px -2px 0 #808080"></div>
<div class="a" style="left:318px;top:483px;width:16px;height:16px;background:#cccccc;box-shadow:inset -1px -1px 0 #000,inset 1px 1px 0 #fff,inset -2px -2px 0 #808080"></div>
<svg class="a" style="left:324px;top:488px;" width="4" height="7" viewBox="0 0 4 7" shape-rendering="crispEdges"><rect x="3" y="0" width="1" height="1" fill="#000"/><rect x="2" y="1" width="2" height="1" fill="#000"/><rect x="1" y="2" width="3" height="1" fill="#000"/><rect x="0" y="3" width="4" height="1" fill="#000"/><rect x="1" y="4" width="3" height="1" fill="#000"/><rect x="2" y="5" width="2" height="1" fill="#000"/><rect x="3" y="6" width="1" height="1" fill="#000"/></svg>
<div class="a" style="left:334px;top:483px;width:30px;height:16px;background:#cccccc;box-shadow:inset -1px -1px 0 #000,inset 1px 1px 0 #fff,inset -2px -2px 0 #808080"></div>
<div class="a" style="left:1029px;top:483px;width:16px;height:16px;background:#cccccc;box-shadow:inset -1px -1px 0 #000,inset 1px 1px 0 #fff,inset -2px -2px 0 #808080"></div>
<svg class="a" style="left:1036px;top:488px;" width="4" height="7" viewBox="0 0 4 7" shape-rendering="crispEdges"><rect x="0" y="0" width="1" height="1" fill="#000"/><rect x="0" y="1" width="2" height="1" fill="#000"/><rect x="0" y="2" width="3" height="1" fill="#000"/><rect x="0" y="3" width="4" height="1" fill="#000"/><rect x="0" y="4" width="3" height="1" fill="#000"/><rect x="0" y="5" width="2" height="1" fill="#000"/><rect x="0" y="6" width="1" height="1" fill="#000"/></svg>
<div class="a" style="left:1045px;top:483px;width:16px;height:16px;background:#cccccc"></div>
<div class="a" style="left:4px;top:505px;width:1059px;height:1px;background:#000"></div>
<div class="a" style="left:7px;top:509px;width:12px;height:11px;background:#cccccc;box-shadow:inset -1px -1px 0 #000,inset 1px 1px 0 #fff,inset -2px -2px 0 #808080"></div>
<svg class="a" style="left:10px;top:511px;" width="6" height="5" viewBox="0 0 6 5" shape-rendering="crispEdges"><rect x="0" y="0" width="2" height="1" fill="#404040"/><rect x="4" y="0" width="2" height="1" fill="#404040"/><rect x="1" y="1" width="4" height="1" fill="#404040"/><rect x="2" y="2" width="2" height="1" fill="#404040"/><rect x="1" y="3" width="4" height="1" fill="#404040"/><rect x="0" y="4" width="2" height="1" fill="#404040"/><rect x="4" y="4" width="2" height="1" fill="#404040"/></svg>
<div class="a" style="left:7px;top:523px;width:12px;height:12px;background:#cccccc;box-shadow:inset -1px -1px 0 #000,inset 1px 1px 0 #fff,inset -2px -2px 0 #808080"></div>
<svg class="a" style="left:11px;top:525px;" width="4" height="7" viewBox="0 0 4 7" shape-rendering="crispEdges"><rect x="3" y="0" width="1" height="1" fill="#808080"/><rect x="2" y="1" width="2" height="1" fill="#808080"/><rect x="1" y="2" width="3" height="1" fill="#808080"/><rect x="0" y="3" width="4" height="1" fill="#808080"/><rect x="1" y="4" width="3" height="1" fill="#808080"/><rect x="2" y="5" width="2" height="1" fill="#808080"/><rect x="3" y="6" width="1" height="1" fill="#808080"/></svg>
<div class="a" style="left:10px;top:538px;width:3px;height:111px;border:1px solid;border-color:#fff #808080 #808080 #fff"></div>
<div class="a" style="left:14px;top:538px;width:3px;height:111px;border:1px solid;border-color:#fff #808080 #808080 #fff"></div>
<div class="a" style="left:22px;top:510px;width:1035px;height:142px;border-style:solid;border-width:2px 1px 1px 2px;border-color:#808080 #fff #fff #808080;background:#fff"></div>
<div class="a" style="left:23px;top:511px;width:1033px;height:1px;background:#404040"></div>
<div class="a" style="left:23px;top:511px;width:1px;height:140px;background:#404040"></div>
<div class="a mono" style="left:25px;top:512px">&#8211;&#8211;&#8211;&#8211;&#8211;&#8211;&#8211;&#8211;&#8211;&#8211;&#8211;&#8211;&#8211;&#8211;&#8211;&#8211;&#8211;&#8211;&#8211;&#8211;Configuration: userfunc &#8211; Win32 Release&#8211;&#8211;&#8211;&#8211;&#8211;&#8211;&#8211;&#8211;&#8211;&#8211;&#8211;&#8211;&#8211;&#8211;&#8211;&#8211;&#8211;&#8211;&#8211;&#8211;
Compiling...
zclient.cpp

zclient.obj &#8211; 0 error(s), 0 warning(s)</div>
<div class="a" style="left:1040px;top:511px;width:15px;height:14px;background:#cccccc;box-shadow:inset -1px -1px 0 #808080,inset 1px 1px 0 #fff,inset -2px -2px 0 #b0b0b0"></div>
<svg class="a" style="left:1044px;top:516px;" width="7" height="4" viewBox="0 0 7 4" shape-rendering="crispEdges"><rect x="3" y="0" width="1" height="1" fill="#000"/><rect x="2" y="1" width="3" height="1" fill="#000"/><rect x="1" y="2" width="5" height="1" fill="#000"/><rect x="0" y="3" width="7" height="1" fill="#000"/></svg>
<div class="a" style="left:1040px;top:525px;width:15px;height:92px;background:#cccccc;box-shadow:inset -1px -1px 0 #808080,inset 1px 1px 0 #fff,inset -2px -2px 0 #b0b0b0"></div>
<div class="a" style="left:1040px;top:617px;width:15px;height:1px;background:#404040"></div>
<div class="a" style="left:1040px;top:619px;width:15px;height:16px;background:#cccccc;box-shadow:inset -1px -1px 0 #808080,inset 1px 1px 0 #fff,inset -2px -2px 0 #b0b0b0"></div>
<svg class="a" style="left:1044px;top:625px;" width="7" height="4" viewBox="0 0 7 4" shape-rendering="crispEdges"><rect x="0" y="0" width="7" height="1" fill="#000"/><rect x="1" y="1" width="5" height="1" fill="#000"/><rect x="2" y="2" width="3" height="1" fill="#000"/><rect x="3" y="3" width="1" height="1" fill="#000"/></svg>
<div class="a" style="left:1040px;top:635px;width:15px;height:15px;background:#cccccc"></div>
<div class="a" style="left:24px;top:635px;width:1016px;height:15px;background:#cccccc"></div>
<div class="a" style="left:24px;top:635px;width:468px;height:1px;background:#000"></div>
<div class="a" style="left:24px;top:636px;width:15px;height:14px;background:#cccccc;box-shadow:inset -1px -1px 0 #000,inset 1px 1px 0 #fff,inset -2px -2px 0 #808080"></div>
<svg class="a" style="left:29px;top:640px;" width="4" height="7" viewBox="0 0 4 7" shape-rendering="crispEdges"><rect x="3" y="0" width="1" height="1" fill="#808080"/><rect x="2" y="1" width="2" height="1" fill="#808080"/><rect x="1" y="2" width="3" height="1" fill="#808080"/><rect x="0" y="3" width="4" height="1" fill="#808080"/><rect x="1" y="4" width="3" height="1" fill="#808080"/><rect x="2" y="5" width="2" height="1" fill="#808080"/><rect x="3" y="6" width="1" height="1" fill="#808080"/></svg>
<div class="a" style="left:39px;top:636px;width:15px;height:14px;background:#cccccc;box-shadow:inset -1px -1px 0 #000,inset 1px 1px 0 #fff,inset -2px -2px 0 #808080"></div>
<svg class="a" style="left:45px;top:640px;" width="4" height="7" viewBox="0 0 4 7" shape-rendering="crispEdges"><rect x="0" y="0" width="1" height="1" fill="#808080"/><rect x="0" y="1" width="2" height="1" fill="#808080"/><rect x="0" y="2" width="3" height="1" fill="#808080"/><rect x="0" y="3" width="4" height="1" fill="#808080"/><rect x="0" y="4" width="3" height="1" fill="#808080"/><rect x="0" y="5" width="2" height="1" fill="#808080"/><rect x="0" y="6" width="1" height="1" fill="#808080"/></svg>
<svg class="a" style="left:55px;top:635px;" width="442" height="15" viewBox="0 0 442 15" shape-rendering="crispEdges"><polygon points="0,0 437,0 437,14 0,14" fill="#cccccc"/><rect x="48" y="0" width="394" height="1" fill="#000"/><rect x="42" y="14" width="265" height="1" fill="#808080"/><polygon points="1,0 47,0 41,14 7,14" fill="#fff" shape-rendering="geometricPrecision"/><rect x="1" y="0" width="1" height="1" fill="#000"/><rect x="1" y="1" width="1" height="1" fill="#000"/><rect x="2" y="2" width="1" height="1" fill="#000"/><rect x="2" y="3" width="1" height="1" fill="#000"/><rect x="3" y="4" width="1" height="1" fill="#000"/><rect x="3" y="5" width="1" height="1" fill="#000"/><rect x="4" y="6" width="1" height="1" fill="#000"/><rect x="4" y="7" width="1" height="1" fill="#000"/><rect x="4" y="8" width="1" height="1" fill="#000"/><rect x="5" y="9" width="1" height="1" fill="#000"/><rect x="5" y="10" width="1" height="1" fill="#000"/><rect x="6" y="11" width="1" height="1" fill="#000"/><rect x="6" y="12" width="1" height="1" fill="#000"/><rect x="7" y="13" width="1" height="1" fill="#000"/><rect x="7" y="14" width="1" height="1" fill="#000"/><rect x="7" y="14" width="35" height="1" fill="#000"/><rect x="47" y="0" width="1" height="1" fill="#000"/><rect x="47" y="1" width="1" height="1" fill="#000"/><rect x="46" y="2" width="1" height="1" fill="#000"/><rect x="46" y="3" width="1" height="1" fill="#000"/><rect x="45" y="4" width="1" height="1" fill="#000"/><rect x="45" y="5" width="1" height="1" fill="#000"/><rect x="44" y="6" width="1" height="1" fill="#000"/><rect x="44" y="7" width="1" height="1" fill="#000"/><rect x="44" y="8" width="1" height="1" fill="#000"/><rect x="43" y="9" width="1" height="1" fill="#000"/><rect x="43" y="10" width="1" height="1" fill="#000"/><rect x="42" y="11" width="1" height="1" fill="#000"/><rect x="42" y="12" width="1" height="1" fill="#000"/><rect x="41" y="13" width="1" height="1" fill="#000"/><rect x="41" y="14" width="1" height="1" fill="#000"/><rect x="44" y="7" width="1" height="1" fill="#000"/><rect x="44" y="8" width="1" height="1" fill="#000"/><rect x="45" y="9" width="1" height="1" fill="#000"/><rect x="45" y="10" width="1" height="1" fill="#000"/><rect x="46" y="11" width="1" height="1" fill="#000"/><rect x="46" y="12" width="1" height="1" fill="#000"/><rect x="47" y="13" width="1" height="1" fill="#000"/><rect x="47" y="14" width="1" height="1" fill="#000"/><rect x="87" y="0" width="1" height="1" fill="#000"/><rect x="87" y="1" width="1" height="1" fill="#000"/><rect x="88" y="2" width="1" height="1" fill="#000"/><rect x="88" y="3" width="1" height="1" fill="#000"/><rect x="89" y="4" width="1" height="1" fill="#000"/><rect x="89" y="5" width="1" height="1" fill="#000"/><rect x="90" y="6" width="1" height="1" fill="#000"/><rect x="90" y="7" width="1" height="1" fill="#000"/><rect x="90" y="8" width="1" height="1" fill="#000"/><rect x="91" y="9" width="1" height="1" fill="#000"/><rect x="91" y="10" width="1" height="1" fill="#000"/><rect x="92" y="11" width="1" height="1" fill="#000"/><rect x="92" y="12" width="1" height="1" fill="#000"/><rect x="93" y="13" width="1" height="1" fill="#000"/><rect x="93" y="14" width="1" height="1" fill="#000"/><rect x="90" y="8" width="1" height="1" fill="#000"/><rect x="89" y="9" width="1" height="1" fill="#000"/><rect x="89" y="10" width="1" height="1" fill="#000"/><rect x="88" y="11" width="1" height="1" fill="#000"/><rect x="88" y="12" width="1" height="1" fill="#000"/><rect x="87" y="13" width="1" height="1" fill="#000"/><rect x="87" y="14" width="1" height="1" fill="#000"/><rect x="171" y="0" width="1" height="1" fill="#000"/><rect x="171" y="1" width="1" height="1" fill="#000"/><rect x="172" y="2" width="1" height="1" fill="#000"/><rect x="172" y="3" width="1" height="1" fill="#000"/><rect x="173" y="4" width="1" height="1" fill="#000"/><rect x="173" y="5" width="1" height="1" fill="#000"/><rect x="174" y="6" width="1" height="1" fill="#000"/><rect x="174" y="7" width="1" height="1" fill="#000"/><rect x="174" y="8" width="1" height="1" fill="#000"/><rect x="175" y="9" width="1" height="1" fill="#000"/><rect x="175" y="10" width="1" height="1" fill="#000"/><rect x="176" y="11" width="1" height="1" fill="#000"/><rect x="176" y="12" width="1" height="1" fill="#000"/><rect x="177" y="13" width="1" height="1" fill="#000"/><rect x="177" y="14" width="1" height="1" fill="#000"/><rect x="174" y="8" width="1" height="1" fill="#000"/><rect x="173" y="9" width="1" height="1" fill="#000"/><rect x="173" y="10" width="1" height="1" fill="#000"/><rect x="172" y="11" width="1" height="1" fill="#000"/><rect x="172" y="12" width="1" height="1" fill="#000"/><rect x="171" y="13" width="1" height="1" fill="#000"/><rect x="171" y="14" width="1" height="1" fill="#000"/><rect x="256" y="0" width="1" height="1" fill="#000"/><rect x="256" y="1" width="1" height="1" fill="#000"/><rect x="257" y="2" width="1" height="1" fill="#000"/><rect x="257" y="3" width="1" height="1" fill="#000"/><rect x="257" y="4" width="1" height="1" fill="#000"/><rect x="258" y="5" width="1" height="1" fill="#000"/><rect x="258" y="6" width="1" height="1" fill="#000"/><rect x="258" y="7" width="1" height="1" fill="#000"/><rect x="259" y="8" width="1" height="1" fill="#000"/><rect x="259" y="9" width="1" height="1" fill="#000"/><rect x="260" y="10" width="1" height="1" fill="#000"/><rect x="260" y="11" width="1" height="1" fill="#000"/><rect x="260" y="12" width="1" height="1" fill="#000"/><rect x="261" y="13" width="1" height="1" fill="#000"/><rect x="261" y="14" width="1" height="1" fill="#000"/><rect x="258" y="8" width="1" height="1" fill="#000"/><rect x="257" y="9" width="1" height="1" fill="#000"/><rect x="257" y="10" width="1" height="1" fill="#000"/><rect x="256" y="11" width="1" height="1" fill="#000"/><rect x="256" y="12" width="1" height="1" fill="#000"/><rect x="255" y="13" width="1" height="1" fill="#000"/><rect x="255" y="14" width="1" height="1" fill="#000"/><rect x="313" y="0" width="1" height="1" fill="#000"/><rect x="313" y="1" width="1" height="1" fill="#000"/><rect x="312" y="2" width="1" height="1" fill="#000"/><rect x="312" y="3" width="1" height="1" fill="#000"/><rect x="311" y="4" width="1" height="1" fill="#000"/><rect x="311" y="5" width="1" height="1" fill="#000"/><rect x="310" y="6" width="1" height="1" fill="#000"/><rect x="310" y="7" width="1" height="1" fill="#000"/><rect x="310" y="8" width="1" height="1" fill="#000"/><rect x="309" y="9" width="1" height="1" fill="#000"/><rect x="309" y="10" width="1" height="1" fill="#000"/><rect x="308" y="11" width="1" height="1" fill="#000"/><rect x="308" y="12" width="1" height="1" fill="#000"/><rect x="307" y="13" width="1" height="1" fill="#000"/><rect x="307" y="14" width="1" height="1" fill="#000"/></svg>
<div class="a " style="left:67px;top:636px;white-space:pre;font-size:10px;line-height:14px;letter-spacing:0.3px">Build</div>
<div class="a " style="left:107px;top:636px;white-space:pre;font-size:10px;line-height:14px;letter-spacing:0.3px">Debug</div>
<div class="a " style="left:153px;top:636px;white-space:pre;font-size:10px;line-height:14px;letter-spacing:0.3px">Find in Files 1</div>
<div class="a " style="left:238px;top:636px;white-space:pre;font-size:10px;line-height:14px;letter-spacing:0.3px">Find in Files 2</div>
<div class="a " style="left:323px;top:636px;white-space:pre;font-size:10px;line-height:14px;letter-spacing:0.3px">Results</div>
<div class="a" style="left:493px;top:635px;width:1px;height:15px;background:#000"></div>
<div class="a" style="left:494px;top:635px;width:1px;height:15px;background:#fff"></div>
<div class="a dither" style="left:497px;top:636px;width:530px;height:14px"></div>
<div class="a" style="left:497px;top:636px;width:15px;height:14px;background:#cccccc;box-shadow:inset -1px -1px 0 #808080,inset 1px 1px 0 #fff,inset -2px -2px 0 #b0b0b0"></div>
<svg class="a" style="left:502px;top:639px;" width="4" height="7" viewBox="0 0 4 7" shape-rendering="crispEdges"><rect x="3" y="0" width="1" height="1" fill="#000"/><rect x="2" y="1" width="2" height="1" fill="#000"/><rect x="1" y="2" width="3" height="1" fill="#000"/><rect x="0" y="3" width="4" height="1" fill="#000"/><rect x="1" y="4" width="3" height="1" fill="#000"/><rect x="2" y="5" width="2" height="1" fill="#000"/><rect x="3" y="6" width="1" height="1" fill="#000"/></svg>
<div class="a" style="left:512px;top:636px;width:33px;height:14px;background:#cccccc;box-shadow:inset -1px -1px 0 #808080,inset 1px 1px 0 #fff,inset -2px -2px 0 #b0b0b0"></div>
<div class="a" style="left:1026px;top:636px;width:14px;height:14px;background:#cccccc;box-shadow:inset -1px -1px 0 #808080,inset 1px 1px 0 #fff,inset -2px -2px 0 #b0b0b0"></div>
<svg class="a" style="left:1031px;top:639px;" width="4" height="7" viewBox="0 0 4 7" shape-rendering="crispEdges"><rect x="0" y="0" width="1" height="1" fill="#000"/><rect x="0" y="1" width="2" height="1" fill="#000"/><rect x="0" y="2" width="3" height="1" fill="#000"/><rect x="0" y="3" width="4" height="1" fill="#000"/><rect x="0" y="4" width="3" height="1" fill="#000"/><rect x="0" y="5" width="2" height="1" fill="#000"/><rect x="0" y="6" width="1" height="1" fill="#000"/></svg>
<div class="a" style="left:4px;top:655px;width:1059px;height:1px;background:#808080"></div>
<div class="a" style="left:4px;top:656px;width:1059px;height:1px;background:#fff"></div>
<div class="a " style="left:11px;top:661px;white-space:pre;line-height:13px">Ready</div>
<svg class="a" style="left:1050px;top:661px;" width="13" height="13" viewBox="0 0 13 13" shape-rendering="crispEdges"><g shape-rendering="geometricPrecision" stroke-width="1"><path d="M12 2 L2 12 M12 5 L5 12 M12 8 L8 12" stroke="#808080"/><path d="M12 3 L3 12 M12 6 L6 12 M12 9 L9 12" stroke="#fff"/></g></svg>
<svg class="a" style="left:900px;top:600px;" width="167" height="78" viewBox="0 0 167 78" shape-rendering="crispEdges"><path shape-rendering="geometricPrecision" fill="rgba(255,255,255,0.4)" stroke="rgba(120,120,120,0.4)" stroke-width="0.7" d="M27 17 H70 V24 H47 V72 H38 V24 H27 Z M47 26 L56 26 L69 42 L62 49 L47 33 Z M73 16 H84 V11 H90 V16 H100 V23 H90 V30 H112 V37 H72 V30 H84 V23 H73 Z M76 41 H100 V47 H90 V54 H100 V60 H90 V68 H84 V60 H74 V54 H84 V47 H76 Z M101 11 H107 V30 L118 62 L112 66 L101 36 Z M122 22 H138 V64 H122 Z M128 28 V58 H132 V28 Z M141 18 H160 V48 H148 V62 H162 V70 H141 Z M148 25 V41 H153 V25 Z"/></svg>
<div class="a " style="left:951px;top:659px;white-space:pre;font-size:14px;letter-spacing:-0.5px;line-height:16px;color:rgba(255,255,255,0.5);-webkit-text-stroke:0.5px rgba(110,110,110,0.5)">www.xiazaiba.com</div>
</body></html>
